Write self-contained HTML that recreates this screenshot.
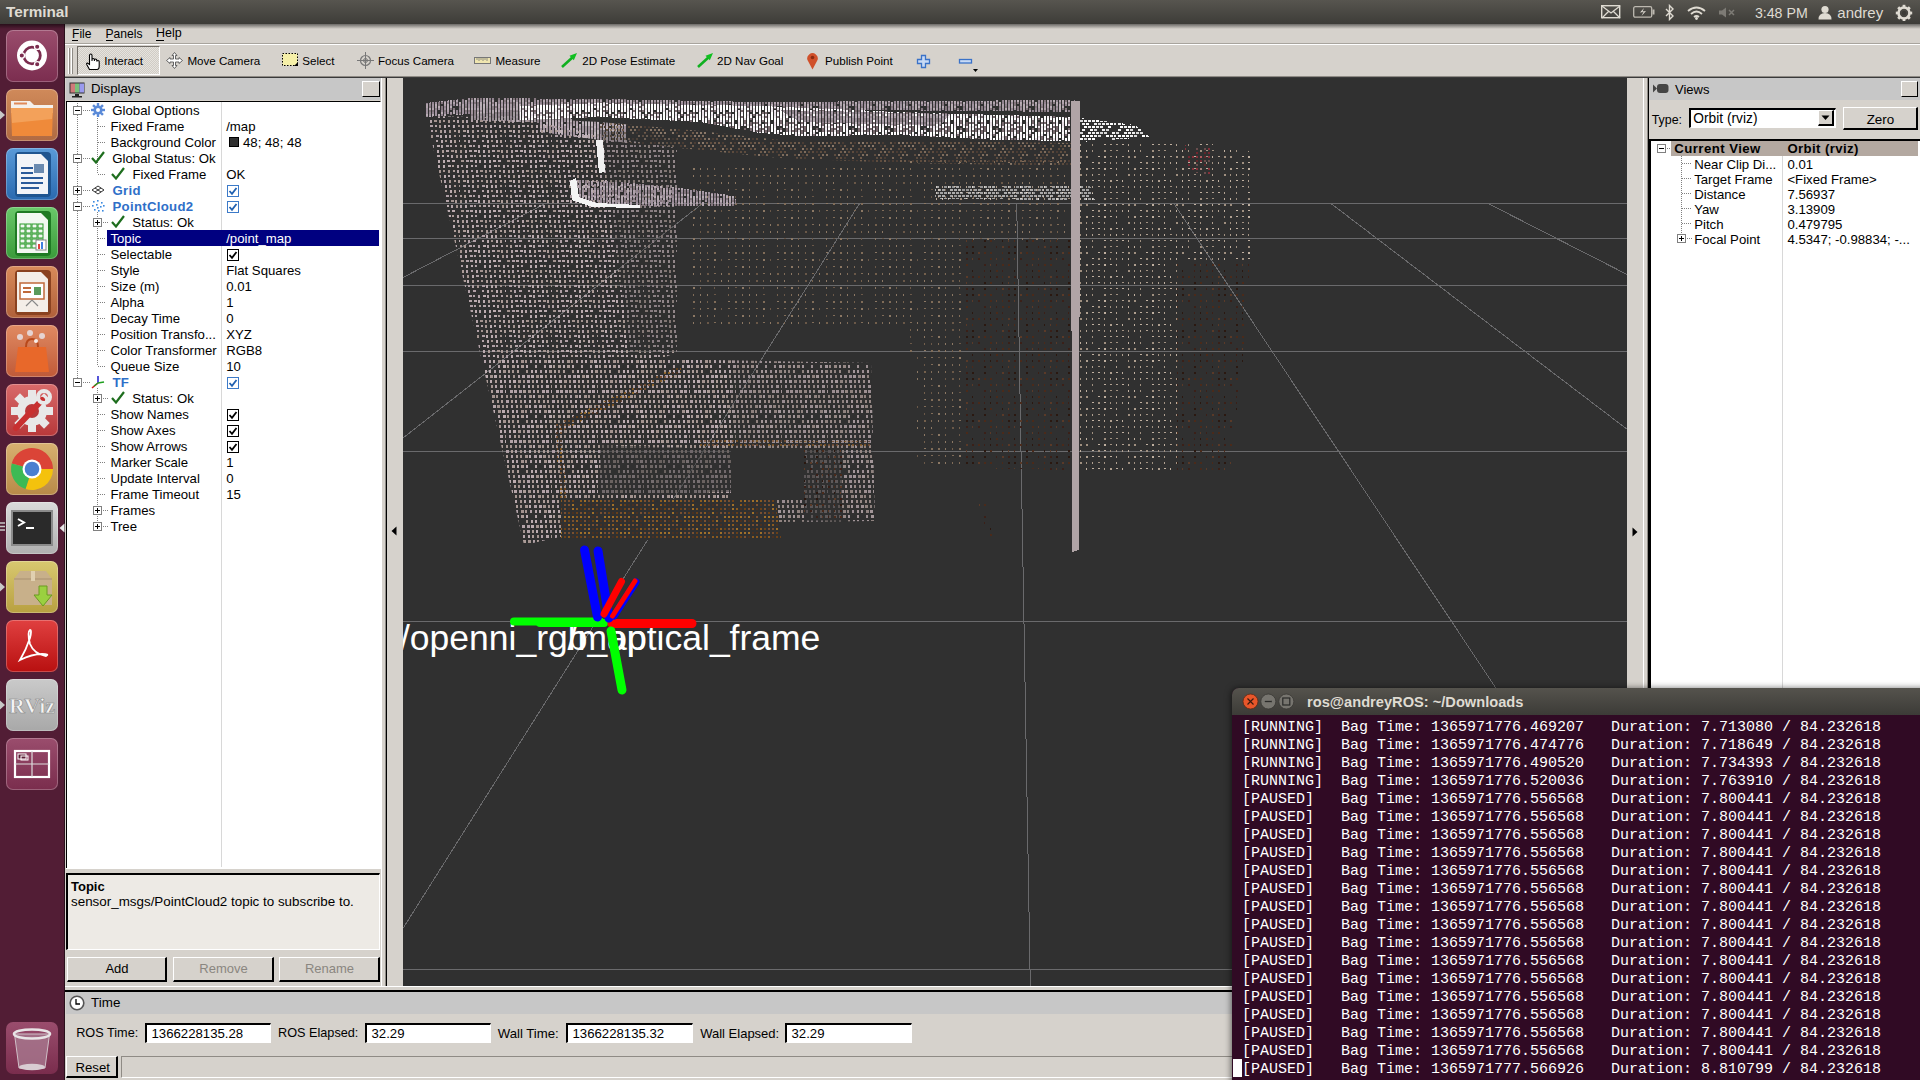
<!DOCTYPE html><html><head><meta charset="utf-8"><style>html,body{margin:0;padding:0;}body{width:1920px;height:1080px;overflow:hidden;position:relative;background:#d6d2cb;font-family:"Liberation Sans",sans-serif;}div{box-sizing:border-box;}</style></head><body>
<div style="position:absolute;left:65px;top:24px;width:1855px;height:1056px;background:#d6d2cc"></div>
<div style="position:absolute;left:72px;top:26.85px;font-family:'Liberation Sans', sans-serif;font-size:12.1px;line-height:14.52px;color:#000;font-weight:normal;white-space:pre;">File</div>
<div style="position:absolute;left:105.5px;top:26.85px;font-family:'Liberation Sans', sans-serif;font-size:12.1px;line-height:14.52px;color:#000;font-weight:normal;white-space:pre;">Panels</div>
<div style="position:absolute;left:156px;top:26.47px;font-family:'Liberation Sans', sans-serif;font-size:12.5px;line-height:15.00px;color:#000;font-weight:normal;white-space:pre;">Help</div>
<div style="position:absolute;left:72px;top:40px;width:6px;height:1px;background:#000"></div>
<div style="position:absolute;left:106px;top:40px;width:7px;height:1px;background:#000"></div>
<div style="position:absolute;left:156px;top:40px;width:8px;height:1px;background:#000"></div>
<div style="position:absolute;left:65px;top:43px;width:1855px;height:1px;background:#a8a49d"></div>
<div style="position:absolute;left:65px;top:44px;width:1855px;height:1px;background:#fff"></div>
<div style="position:absolute;left:65px;top:76px;width:1855px;height:1px;background:#8f8b85"></div>
<div style="position:absolute;left:65px;top:77px;width:1855px;height:1px;background:#3a3a3a"></div>
<div style="position:absolute;left:68px;top:48px;width:2px;height:26px;border-left:1px solid #fff;border-right:1px solid #8f8b85"></div>
<div style="position:absolute;left:71px;top:48px;width:2px;height:26px;border-left:1px solid #fff;border-right:1px solid #8f8b85"></div>
<div style="position:absolute;left:77px;top:46px;width:83px;height:29px;border-left:1px solid #6f6b65;border-top:1px solid #6f6b65;border-right:1px solid #fff;border-bottom:1px solid #fff;background:repeating-conic-gradient(#e6e3de 0 25%,#d0ccc5 0 50%) 0 0/2px 2px"></div>
<svg style="position:absolute;left:84px;top:53px" width="18" height="18"><path d="M5.5 16.5 L3 12 Q2 10 3.5 10 L5.5 11.5 L5.5 2.5 Q5.5 1 6.8 1 Q8 1 8 2.5 L8 8 L8 6.5 Q8 5.5 9.2 5.5 Q10.4 5.5 10.4 6.5 L10.4 8 L10.4 7 Q10.4 6 11.6 6 Q12.8 6 12.8 7 L12.8 8.5 Q12.8 7.5 14 7.5 Q15.2 7.5 15.2 8.5 L15.2 13 Q15.2 16.5 13 16.5 Z" fill="#fff" stroke="#000" stroke-width="1.1"/></svg>
<div style="position:absolute;left:104.3px;top:53.62px;font-family:'Liberation Sans', sans-serif;font-size:11.6px;line-height:13.92px;color:#000;font-weight:normal;white-space:pre;">Interact</div>
<svg style="position:absolute;left:166px;top:52px" width="17" height="17"><g fill="#fff" stroke="#555" stroke-width="0.9"><path d="M8.5 0.5 L11 3.5 L9.5 3.5 L9.5 7 L13 7 L13 5.5 L16.5 8.5 L13 11.5 L13 10 L9.5 10 L9.5 13.5 L11 13.5 L8.5 16.5 L6 13.5 L7.5 13.5 L7.5 10 L4 10 L4 11.5 L0.5 8.5 L4 5.5 L4 7 L7.5 7 L7.5 3.5 L6 3.5 Z"/></g></svg>
<div style="position:absolute;left:187.4px;top:53.62px;font-family:'Liberation Sans', sans-serif;font-size:11.6px;line-height:13.92px;color:#000;font-weight:normal;white-space:pre;">Move Camera</div>
<svg style="position:absolute;left:282px;top:53px" width="17" height="14"><rect x="0.5" y="0.5" width="15" height="12" fill="#f6f0a8" stroke="#000" stroke-dasharray="1.5 1.5"/><path d="M12 13 L16 9 L16 13 Z" fill="#000"/></svg>
<div style="position:absolute;left:302.3px;top:53.62px;font-family:'Liberation Sans', sans-serif;font-size:11.6px;line-height:13.92px;color:#000;font-weight:normal;white-space:pre;">Select</div>
<svg style="position:absolute;left:357px;top:52px" width="17" height="17"><circle cx="8.5" cy="8.5" r="5" fill="none" stroke="#777" stroke-width="1.2"/><circle cx="8.5" cy="8.5" r="2" fill="none" stroke="#777"/><path d="M8.5 0 V17 M0 8.5 H17" stroke="#777" stroke-width="1"/></svg>
<div style="position:absolute;left:378px;top:53.62px;font-family:'Liberation Sans', sans-serif;font-size:11.6px;line-height:13.92px;color:#000;font-weight:normal;white-space:pre;">Focus Camera</div>
<svg style="position:absolute;left:474px;top:57px" width="17" height="7"><rect x="0.5" y="0.5" width="16" height="6" fill="#f0e6b0" stroke="#777"/><path d="M3 1v2M5 1v3M7 1v2M9 1v3M11 1v2M13 1v3" stroke="#777" stroke-width="0.8"/></svg>
<div style="position:absolute;left:495.4px;top:53.62px;font-family:'Liberation Sans', sans-serif;font-size:11.6px;line-height:13.92px;color:#000;font-weight:normal;white-space:pre;">Measure</div>
<svg style="position:absolute;left:561px;top:52px" width="17" height="16"><path d="M1 15 L13 4" stroke="#10b020" stroke-width="2.6"/><path d="M16 1 L8.5 3.8 L12.8 8.2 Z" fill="#10c020"/></svg>
<div style="position:absolute;left:582.3px;top:53.62px;font-family:'Liberation Sans', sans-serif;font-size:11.6px;line-height:13.92px;color:#000;font-weight:normal;white-space:pre;">2D Pose Estimate</div>
<svg style="position:absolute;left:697px;top:52px" width="17" height="16"><path d="M1 15 L13 4" stroke="#10b020" stroke-width="2.6"/><path d="M16 1 L8.5 3.8 L12.8 8.2 Z" fill="#10c020"/></svg>
<div style="position:absolute;left:717px;top:53.62px;font-family:'Liberation Sans', sans-serif;font-size:11.6px;line-height:13.92px;color:#000;font-weight:normal;white-space:pre;">2D Nav Goal</div>
<svg style="position:absolute;left:806px;top:52px" width="13" height="18"><path d="M6.5 17.5 L2 9 A5.2 5.2 0 1 1 11 9 Z" fill="#d0502a"/><circle cx="6.5" cy="5.5" r="1.8" fill="#8a2a10"/></svg>
<div style="position:absolute;left:825px;top:53.62px;font-family:'Liberation Sans', sans-serif;font-size:11.6px;line-height:13.92px;color:#000;font-weight:normal;white-space:pre;">Publish Point</div>
<svg style="position:absolute;left:916px;top:54px" width="15" height="15"><path d="M5.5 1.5 H9.5 V5.5 H13.5 V9.5 H9.5 V13.5 H5.5 V9.5 H1.5 V5.5 H5.5 Z" fill="#c8daf5" stroke="#3a72c8" stroke-width="1.3"/></svg>
<svg style="position:absolute;left:958px;top:57px" width="22" height="16"><rect x="1.5" y="2.5" width="12" height="3.5" fill="#c8daf5" stroke="#3a72c8" stroke-width="1.3"/><path d="M15 12 L20 12 L17.5 15 Z" fill="#000"/></svg>
<div style="position:absolute;left:66px;top:78px;width:315px;height:22px;background:#c7c7c7"></div>
<svg style="position:absolute;left:69px;top:82px" width="17" height="16"><rect x="0.5" y="0.5" width="15" height="11" fill="#333"/><rect x="1.5" y="1.5" width="4.5" height="9" fill="#d07a7a"/><rect x="6" y="1.5" width="4.5" height="9" fill="#7ac07a"/><rect x="10.5" y="1.5" width="4.5" height="9" fill="#9a9aee"/><rect x="6" y="12" width="4" height="2" fill="#222"/><rect x="3" y="14" width="10" height="1.5" fill="#222"/></svg>
<div style="position:absolute;left:91.1px;top:81.31px;font-family:'Liberation Sans', sans-serif;font-size:13.2px;line-height:15.84px;color:#000;font-weight:normal;white-space:pre;">Displays</div>
<div style="position:absolute;left:362px;top:81px;width:18px;height:16px;background:#d6d2cc;border-top:1px solid #fff;border-left:1px solid #fff;border-right:1px solid #000;border-bottom:1px solid #000"></div>
<div style="position:absolute;left:66px;top:101px;width:315px;height:767px;background:#fff;border-top:1px solid #000;border-left:1px solid #000;border-right:1px solid #fff"></div>
<div style="position:absolute;left:221px;top:102px;width:1px;height:765px;background:#d8d8d8"></div>
<div style="position:absolute;left:77px;top:103px;width:1px;height:279px;background:repeating-linear-gradient(180deg,#808080 0 1px,transparent 1px 2px)"></div>
<div style="position:absolute;left:97px;top:116px;width:1px;height:58px;background:repeating-linear-gradient(180deg,#808080 0 1px,transparent 1px 2px)"></div>
<div style="position:absolute;left:97px;top:164px;width:1px;height:10px;background:repeating-linear-gradient(180deg,#808080 0 1px,transparent 1px 2px)"></div>
<div style="position:absolute;left:97px;top:212px;width:1px;height:154px;background:repeating-linear-gradient(180deg,#808080 0 1px,transparent 1px 2px)"></div>
<div style="position:absolute;left:97px;top:388px;width:1px;height:138px;background:repeating-linear-gradient(180deg,#808080 0 1px,transparent 1px 2px)"></div>
<svg style="position:absolute;left:73px;top:106px" width="9" height="9"><rect x="0.5" y="0.5" width="8" height="8" fill="#fff" stroke="#808080"/><line x1="2" y1="4.5" x2="7" y2="4.5" stroke="#000"/></svg>
<div style="position:absolute;left:83px;top:110px;width:7px;height:1px;background:repeating-linear-gradient(90deg,#808080 0 1px,transparent 1px 2px)"></div>
<svg style="position:absolute;left:91px;top:103px" width="14" height="14"><g fill="#5a8ad8"><circle cx="7" cy="7" r="4.6"/><rect x="5.8" y="0" width="2.4" height="3" transform="rotate(0 7 7)"/><rect x="5.8" y="0" width="2.4" height="3" transform="rotate(45 7 7)"/><rect x="5.8" y="0" width="2.4" height="3" transform="rotate(90 7 7)"/><rect x="5.8" y="0" width="2.4" height="3" transform="rotate(135 7 7)"/><rect x="5.8" y="0" width="2.4" height="3" transform="rotate(180 7 7)"/><rect x="5.8" y="0" width="2.4" height="3" transform="rotate(225 7 7)"/><rect x="5.8" y="0" width="2.4" height="3" transform="rotate(270 7 7)"/><rect x="5.8" y="0" width="2.4" height="3" transform="rotate(315 7 7)"/></g><circle cx="7" cy="7" r="2" fill="#fff"/></svg>
<div style="position:absolute;left:112.3px;top:103.01px;font-family:'Liberation Sans', sans-serif;font-size:13.2px;line-height:15.84px;color:#000;font-weight:normal;white-space:pre;">Global Options</div>
<div style="position:absolute;left:98px;top:126px;width:8px;height:1px;background:repeating-linear-gradient(90deg,#808080 0 1px,transparent 1px 2px)"></div>
<div style="position:absolute;left:110.4px;top:119.01px;font-family:'Liberation Sans', sans-serif;font-size:13.2px;line-height:15.84px;color:#000;font-weight:normal;white-space:pre;">Fixed Frame</div>
<div style="position:absolute;left:226.2px;top:119.01px;font-family:'Liberation Sans', sans-serif;font-size:13.2px;line-height:15.84px;color:#000;font-weight:normal;white-space:pre;">/map</div>
<div style="position:absolute;left:98px;top:142px;width:8px;height:1px;background:repeating-linear-gradient(90deg,#808080 0 1px,transparent 1px 2px)"></div>
<div style="position:absolute;left:110.4px;top:135.01px;font-family:'Liberation Sans', sans-serif;font-size:13.2px;line-height:15.84px;color:#000;font-weight:normal;white-space:pre;">Background Color</div>
<div style="position:absolute;left:229px;top:137px;width:10px;height:10px;background:#303030;border:1px solid #000"></div>
<div style="position:absolute;left:243px;top:135.01px;font-family:'Liberation Sans', sans-serif;font-size:13.2px;line-height:15.84px;color:#000;font-weight:normal;white-space:pre;">48; 48; 48</div>
<svg style="position:absolute;left:73px;top:154px" width="9" height="9"><rect x="0.5" y="0.5" width="8" height="8" fill="#fff" stroke="#808080"/><line x1="2" y1="4.5" x2="7" y2="4.5" stroke="#000"/></svg>
<div style="position:absolute;left:83px;top:158px;width:7px;height:1px;background:repeating-linear-gradient(90deg,#808080 0 1px,transparent 1px 2px)"></div>
<svg style="position:absolute;left:91px;top:151px" width="14" height="13"><path d="M1 7 L5 11.5 L13 1" fill="none" stroke="#1e6e1e" stroke-width="2.2"/></svg>
<div style="position:absolute;left:112.3px;top:151.01px;font-family:'Liberation Sans', sans-serif;font-size:13.2px;line-height:15.84px;color:#000;font-weight:normal;white-space:pre;">Global Status: Ok</div>
<div style="position:absolute;left:98px;top:174px;width:8px;height:1px;background:repeating-linear-gradient(90deg,#808080 0 1px,transparent 1px 2px)"></div>
<svg style="position:absolute;left:111px;top:167px" width="14" height="13"><path d="M1 7 L5 11.5 L13 1" fill="none" stroke="#1e6e1e" stroke-width="2.2"/></svg>
<div style="position:absolute;left:132.4px;top:167.01px;font-family:'Liberation Sans', sans-serif;font-size:13.2px;line-height:15.84px;color:#000;font-weight:normal;white-space:pre;">Fixed Frame</div>
<div style="position:absolute;left:226.2px;top:167.01px;font-family:'Liberation Sans', sans-serif;font-size:13.2px;line-height:15.84px;color:#000;font-weight:normal;white-space:pre;">OK</div>
<svg style="position:absolute;left:73px;top:186px" width="9" height="9"><rect x="0.5" y="0.5" width="8" height="8" fill="#fff" stroke="#808080"/><line x1="2" y1="4.5" x2="7" y2="4.5" stroke="#000"/><line x1="4.5" y1="2" x2="4.5" y2="7" stroke="#000"/></svg>
<div style="position:absolute;left:83px;top:190px;width:7px;height:1px;background:repeating-linear-gradient(90deg,#808080 0 1px,transparent 1px 2px)"></div>
<svg style="position:absolute;left:91px;top:185px" width="14" height="10"><path d="M7 1 L13 5 L7 9 L1 5 Z M4 3 L10 7 M10 3 L4 7" fill="none" stroke="#333" stroke-width="1"/></svg>
<div style="position:absolute;left:112.5px;top:183.01px;font-family:'Liberation Sans', sans-serif;font-size:13.2px;line-height:15.84px;color:#2f6fc8;font-weight:bold;white-space:pre;letter-spacing:0.3px">Grid</div>
<svg style="position:absolute;left:227px;top:185px" width="12" height="12"><rect x="0.5" y="0.5" width="11" height="11" fill="#fff" stroke="#3c7ac8"/><path d="M2.5 6 L5 8.8 L9.5 3" fill="none" stroke="#2060b0" stroke-width="1.8"/></svg>
<svg style="position:absolute;left:73px;top:202px" width="9" height="9"><rect x="0.5" y="0.5" width="8" height="8" fill="#fff" stroke="#808080"/><line x1="2" y1="4.5" x2="7" y2="4.5" stroke="#000"/></svg>
<div style="position:absolute;left:83px;top:206px;width:7px;height:1px;background:repeating-linear-gradient(90deg,#808080 0 1px,transparent 1px 2px)"></div>
<svg style="position:absolute;left:91px;top:199px" width="14" height="14"><g fill="#3a8ae0"><rect x="2" y="2" width="1.6" height="1.6"/><rect x="6" y="1" width="1.6" height="1.6"/><rect x="10" y="3" width="1.6" height="1.6"/><rect x="1" y="6" width="1.6" height="1.6"/><rect x="5" y="5" width="1.6" height="1.6"/><rect x="9" y="7" width="1.6" height="1.6"/><rect x="12" y="6" width="1.6" height="1.6"/><rect x="3" y="10" width="1.6" height="1.6"/><rect x="7" y="11" width="1.6" height="1.6"/><rect x="11" y="11" width="1.6" height="1.6"/><rect x="6" y="8" width="1.6" height="1.6"/></g></svg>
<div style="position:absolute;left:112.5px;top:199.01px;font-family:'Liberation Sans', sans-serif;font-size:13.2px;line-height:15.84px;color:#2f6fc8;font-weight:bold;white-space:pre;letter-spacing:0.3px">PointCloud2</div>
<svg style="position:absolute;left:227px;top:201px" width="12" height="12"><rect x="0.5" y="0.5" width="11" height="11" fill="#fff" stroke="#3c7ac8"/><path d="M2.5 6 L5 8.8 L9.5 3" fill="none" stroke="#2060b0" stroke-width="1.8"/></svg>
<svg style="position:absolute;left:93px;top:218px" width="9" height="9"><rect x="0.5" y="0.5" width="8" height="8" fill="#fff" stroke="#808080"/><line x1="2" y1="4.5" x2="7" y2="4.5" stroke="#000"/><line x1="4.5" y1="2" x2="4.5" y2="7" stroke="#000"/></svg>
<div style="position:absolute;left:103px;top:222px;width:5px;height:1px;background:repeating-linear-gradient(90deg,#808080 0 1px,transparent 1px 2px)"></div>
<svg style="position:absolute;left:111px;top:215px" width="14" height="13"><path d="M1 7 L5 11.5 L13 1" fill="none" stroke="#1e6e1e" stroke-width="2.2"/></svg>
<div style="position:absolute;left:132.2px;top:215.01px;font-family:'Liberation Sans', sans-serif;font-size:13.2px;line-height:15.84px;color:#000;font-weight:normal;white-space:pre;">Status: Ok</div>
<div style="position:absolute;left:98px;top:238px;width:8px;height:1px;background:repeating-linear-gradient(90deg,#808080 0 1px,transparent 1px 2px)"></div>
<div style="position:absolute;left:107px;top:230px;width:272px;height:16px;background:#000080"></div>
<div style="position:absolute;left:110.4px;top:231.01px;font-family:'Liberation Sans', sans-serif;font-size:13.2px;line-height:15.84px;color:#fff;font-weight:normal;white-space:pre;">Topic</div>
<div style="position:absolute;left:226.2px;top:231.01px;font-family:'Liberation Sans', sans-serif;font-size:13.2px;line-height:15.84px;color:#fff;font-weight:normal;white-space:pre;">/point_map</div>
<div style="position:absolute;left:98px;top:254px;width:8px;height:1px;background:repeating-linear-gradient(90deg,#808080 0 1px,transparent 1px 2px)"></div>
<div style="position:absolute;left:110.4px;top:247.01px;font-family:'Liberation Sans', sans-serif;font-size:13.2px;line-height:15.84px;color:#000;font-weight:normal;white-space:pre;">Selectable</div>
<svg style="position:absolute;left:227px;top:249px" width="12" height="12"><rect x="0.5" y="0.5" width="11" height="11" fill="#fff" stroke="#000"/><path d="M2.5 6 L5 8.8 L9.5 3" fill="none" stroke="#000" stroke-width="1.8"/></svg>
<div style="position:absolute;left:98px;top:270px;width:8px;height:1px;background:repeating-linear-gradient(90deg,#808080 0 1px,transparent 1px 2px)"></div>
<div style="position:absolute;left:110.4px;top:263.01px;font-family:'Liberation Sans', sans-serif;font-size:13.2px;line-height:15.84px;color:#000;font-weight:normal;white-space:pre;">Style</div>
<div style="position:absolute;left:226.2px;top:263.01px;font-family:'Liberation Sans', sans-serif;font-size:13.2px;line-height:15.84px;color:#000;font-weight:normal;white-space:pre;">Flat Squares</div>
<div style="position:absolute;left:98px;top:286px;width:8px;height:1px;background:repeating-linear-gradient(90deg,#808080 0 1px,transparent 1px 2px)"></div>
<div style="position:absolute;left:110.4px;top:279.01px;font-family:'Liberation Sans', sans-serif;font-size:13.2px;line-height:15.84px;color:#000;font-weight:normal;white-space:pre;">Size (m)</div>
<div style="position:absolute;left:226.2px;top:279.01px;font-family:'Liberation Sans', sans-serif;font-size:13.2px;line-height:15.84px;color:#000;font-weight:normal;white-space:pre;">0.01</div>
<div style="position:absolute;left:98px;top:302px;width:8px;height:1px;background:repeating-linear-gradient(90deg,#808080 0 1px,transparent 1px 2px)"></div>
<div style="position:absolute;left:110.4px;top:295.01px;font-family:'Liberation Sans', sans-serif;font-size:13.2px;line-height:15.84px;color:#000;font-weight:normal;white-space:pre;">Alpha</div>
<div style="position:absolute;left:226.2px;top:295.01px;font-family:'Liberation Sans', sans-serif;font-size:13.2px;line-height:15.84px;color:#000;font-weight:normal;white-space:pre;">1</div>
<div style="position:absolute;left:98px;top:318px;width:8px;height:1px;background:repeating-linear-gradient(90deg,#808080 0 1px,transparent 1px 2px)"></div>
<div style="position:absolute;left:110.4px;top:311.01px;font-family:'Liberation Sans', sans-serif;font-size:13.2px;line-height:15.84px;color:#000;font-weight:normal;white-space:pre;">Decay Time</div>
<div style="position:absolute;left:226.2px;top:311.01px;font-family:'Liberation Sans', sans-serif;font-size:13.2px;line-height:15.84px;color:#000;font-weight:normal;white-space:pre;">0</div>
<div style="position:absolute;left:98px;top:334px;width:8px;height:1px;background:repeating-linear-gradient(90deg,#808080 0 1px,transparent 1px 2px)"></div>
<div style="position:absolute;left:110.4px;top:327.01px;font-family:'Liberation Sans', sans-serif;font-size:13.2px;line-height:15.84px;color:#000;font-weight:normal;white-space:pre;">Position Transfo...</div>
<div style="position:absolute;left:226.2px;top:327.01px;font-family:'Liberation Sans', sans-serif;font-size:13.2px;line-height:15.84px;color:#000;font-weight:normal;white-space:pre;">XYZ</div>
<div style="position:absolute;left:98px;top:350px;width:8px;height:1px;background:repeating-linear-gradient(90deg,#808080 0 1px,transparent 1px 2px)"></div>
<div style="position:absolute;left:110.4px;top:343.01px;font-family:'Liberation Sans', sans-serif;font-size:13.2px;line-height:15.84px;color:#000;font-weight:normal;white-space:pre;">Color Transformer</div>
<div style="position:absolute;left:226.2px;top:343.01px;font-family:'Liberation Sans', sans-serif;font-size:13.2px;line-height:15.84px;color:#000;font-weight:normal;white-space:pre;">RGB8</div>
<div style="position:absolute;left:98px;top:366px;width:8px;height:1px;background:repeating-linear-gradient(90deg,#808080 0 1px,transparent 1px 2px)"></div>
<div style="position:absolute;left:110.4px;top:359.01px;font-family:'Liberation Sans', sans-serif;font-size:13.2px;line-height:15.84px;color:#000;font-weight:normal;white-space:pre;">Queue Size</div>
<div style="position:absolute;left:226.2px;top:359.01px;font-family:'Liberation Sans', sans-serif;font-size:13.2px;line-height:15.84px;color:#000;font-weight:normal;white-space:pre;">10</div>
<svg style="position:absolute;left:73px;top:378px" width="9" height="9"><rect x="0.5" y="0.5" width="8" height="8" fill="#fff" stroke="#808080"/><line x1="2" y1="4.5" x2="7" y2="4.5" stroke="#000"/></svg>
<div style="position:absolute;left:83px;top:382px;width:7px;height:1px;background:repeating-linear-gradient(90deg,#808080 0 1px,transparent 1px 2px)"></div>
<svg style="position:absolute;left:90px;top:374px" width="16" height="16"><path d="M8 9 L8 2" stroke="#2a2ad0" stroke-width="1.6"/><path d="M8 9 L14 8" stroke="#20a020" stroke-width="1.6"/><path d="M8 9 L2 14" stroke="#d02020" stroke-width="1.6"/><path d="M8 9 L4 12" stroke="#20a020" stroke-width="1.2"/></svg>
<div style="position:absolute;left:112.5px;top:375.01px;font-family:'Liberation Sans', sans-serif;font-size:13.2px;line-height:15.84px;color:#2f6fc8;font-weight:bold;white-space:pre;letter-spacing:0.3px">TF</div>
<svg style="position:absolute;left:227px;top:377px" width="12" height="12"><rect x="0.5" y="0.5" width="11" height="11" fill="#fff" stroke="#3c7ac8"/><path d="M2.5 6 L5 8.8 L9.5 3" fill="none" stroke="#2060b0" stroke-width="1.8"/></svg>
<svg style="position:absolute;left:93px;top:394px" width="9" height="9"><rect x="0.5" y="0.5" width="8" height="8" fill="#fff" stroke="#808080"/><line x1="2" y1="4.5" x2="7" y2="4.5" stroke="#000"/><line x1="4.5" y1="2" x2="4.5" y2="7" stroke="#000"/></svg>
<div style="position:absolute;left:103px;top:398px;width:5px;height:1px;background:repeating-linear-gradient(90deg,#808080 0 1px,transparent 1px 2px)"></div>
<svg style="position:absolute;left:111px;top:391px" width="14" height="13"><path d="M1 7 L5 11.5 L13 1" fill="none" stroke="#1e6e1e" stroke-width="2.2"/></svg>
<div style="position:absolute;left:132.2px;top:391.01px;font-family:'Liberation Sans', sans-serif;font-size:13.2px;line-height:15.84px;color:#000;font-weight:normal;white-space:pre;">Status: Ok</div>
<div style="position:absolute;left:98px;top:414px;width:8px;height:1px;background:repeating-linear-gradient(90deg,#808080 0 1px,transparent 1px 2px)"></div>
<div style="position:absolute;left:110.4px;top:407.01px;font-family:'Liberation Sans', sans-serif;font-size:13.2px;line-height:15.84px;color:#000;font-weight:normal;white-space:pre;">Show Names</div>
<svg style="position:absolute;left:227px;top:409px" width="12" height="12"><rect x="0.5" y="0.5" width="11" height="11" fill="#fff" stroke="#000"/><path d="M2.5 6 L5 8.8 L9.5 3" fill="none" stroke="#000" stroke-width="1.8"/></svg>
<div style="position:absolute;left:98px;top:430px;width:8px;height:1px;background:repeating-linear-gradient(90deg,#808080 0 1px,transparent 1px 2px)"></div>
<div style="position:absolute;left:110.4px;top:423.01px;font-family:'Liberation Sans', sans-serif;font-size:13.2px;line-height:15.84px;color:#000;font-weight:normal;white-space:pre;">Show Axes</div>
<svg style="position:absolute;left:227px;top:425px" width="12" height="12"><rect x="0.5" y="0.5" width="11" height="11" fill="#fff" stroke="#000"/><path d="M2.5 6 L5 8.8 L9.5 3" fill="none" stroke="#000" stroke-width="1.8"/></svg>
<div style="position:absolute;left:98px;top:446px;width:8px;height:1px;background:repeating-linear-gradient(90deg,#808080 0 1px,transparent 1px 2px)"></div>
<div style="position:absolute;left:110.4px;top:439.01px;font-family:'Liberation Sans', sans-serif;font-size:13.2px;line-height:15.84px;color:#000;font-weight:normal;white-space:pre;">Show Arrows</div>
<svg style="position:absolute;left:227px;top:441px" width="12" height="12"><rect x="0.5" y="0.5" width="11" height="11" fill="#fff" stroke="#000"/><path d="M2.5 6 L5 8.8 L9.5 3" fill="none" stroke="#000" stroke-width="1.8"/></svg>
<div style="position:absolute;left:98px;top:462px;width:8px;height:1px;background:repeating-linear-gradient(90deg,#808080 0 1px,transparent 1px 2px)"></div>
<div style="position:absolute;left:110.4px;top:455.01px;font-family:'Liberation Sans', sans-serif;font-size:13.2px;line-height:15.84px;color:#000;font-weight:normal;white-space:pre;">Marker Scale</div>
<div style="position:absolute;left:226.2px;top:455.01px;font-family:'Liberation Sans', sans-serif;font-size:13.2px;line-height:15.84px;color:#000;font-weight:normal;white-space:pre;">1</div>
<div style="position:absolute;left:98px;top:478px;width:8px;height:1px;background:repeating-linear-gradient(90deg,#808080 0 1px,transparent 1px 2px)"></div>
<div style="position:absolute;left:110.4px;top:471.01px;font-family:'Liberation Sans', sans-serif;font-size:13.2px;line-height:15.84px;color:#000;font-weight:normal;white-space:pre;">Update Interval</div>
<div style="position:absolute;left:226.2px;top:471.01px;font-family:'Liberation Sans', sans-serif;font-size:13.2px;line-height:15.84px;color:#000;font-weight:normal;white-space:pre;">0</div>
<div style="position:absolute;left:98px;top:494px;width:8px;height:1px;background:repeating-linear-gradient(90deg,#808080 0 1px,transparent 1px 2px)"></div>
<div style="position:absolute;left:110.4px;top:487.01px;font-family:'Liberation Sans', sans-serif;font-size:13.2px;line-height:15.84px;color:#000;font-weight:normal;white-space:pre;">Frame Timeout</div>
<div style="position:absolute;left:226.2px;top:487.01px;font-family:'Liberation Sans', sans-serif;font-size:13.2px;line-height:15.84px;color:#000;font-weight:normal;white-space:pre;">15</div>
<svg style="position:absolute;left:93px;top:506px" width="9" height="9"><rect x="0.5" y="0.5" width="8" height="8" fill="#fff" stroke="#808080"/><line x1="2" y1="4.5" x2="7" y2="4.5" stroke="#000"/><line x1="4.5" y1="2" x2="4.5" y2="7" stroke="#000"/></svg>
<div style="position:absolute;left:103px;top:510px;width:5px;height:1px;background:repeating-linear-gradient(90deg,#808080 0 1px,transparent 1px 2px)"></div>
<div style="position:absolute;left:110.4px;top:503.01px;font-family:'Liberation Sans', sans-serif;font-size:13.2px;line-height:15.84px;color:#000;font-weight:normal;white-space:pre;">Frames</div>
<svg style="position:absolute;left:93px;top:522px" width="9" height="9"><rect x="0.5" y="0.5" width="8" height="8" fill="#fff" stroke="#808080"/><line x1="2" y1="4.5" x2="7" y2="4.5" stroke="#000"/><line x1="4.5" y1="2" x2="4.5" y2="7" stroke="#000"/></svg>
<div style="position:absolute;left:103px;top:526px;width:5px;height:1px;background:repeating-linear-gradient(90deg,#808080 0 1px,transparent 1px 2px)"></div>
<div style="position:absolute;left:110.4px;top:519.01px;font-family:'Liberation Sans', sans-serif;font-size:13.2px;line-height:15.84px;color:#000;font-weight:normal;white-space:pre;">Tree</div>
<div style="position:absolute;left:66px;top:868px;width:315px;height:5px;background:#d6d2cc;border-top:1px solid #fff"></div>
<div style="position:absolute;left:66px;top:873px;width:314px;height:77px;background:#edeae5;border-top:2px solid #000;border-left:2px solid #000;border-right:1px solid #fff;border-bottom:1px solid #fff"></div>
<div style="position:absolute;left:71px;top:879.20px;font-family:'Liberation Sans', sans-serif;font-size:13px;line-height:15.60px;color:#000;font-weight:bold;white-space:pre;">Topic</div>
<div style="position:absolute;left:71px;top:893.82px;font-family:'Liberation Sans', sans-serif;font-size:13.4px;line-height:16.08px;color:#000;font-weight:normal;white-space:pre;">sensor_msgs/PointCloud2 topic to subscribe to.</div>
<div style="position:absolute;left:67px;top:957px;width:100px;height:25px;background:#d6d2cc;border-top:1px solid #fff;border-left:1px solid #fff;border-right:2px solid #000;border-bottom:2px solid #000"></div>
<div style="position:absolute;left:67px;top:957px;width:100px;height:25px;line-height:24px;text-align:center;font-size:13px;color:#000;white-space:pre">Add</div>
<div style="position:absolute;left:173px;top:957px;width:101px;height:25px;background:#d6d2cc;border-top:1px solid #fff;border-left:1px solid #fff;border-right:2px solid #000;border-bottom:2px solid #000"></div>
<div style="position:absolute;left:173px;top:957px;width:101px;height:25px;line-height:24px;text-align:center;font-size:13px;color:#8a8680;white-space:pre">Remove</div>
<div style="position:absolute;left:279px;top:957px;width:101px;height:25px;background:#d6d2cc;border-top:1px solid #fff;border-left:1px solid #fff;border-right:2px solid #000;border-bottom:2px solid #000"></div>
<div style="position:absolute;left:279px;top:957px;width:101px;height:25px;line-height:24px;text-align:center;font-size:13px;color:#8a8680;white-space:pre">Rename</div>
<div style="position:absolute;left:381px;top:78px;width:1px;height:909px;background:#fff"></div>
<div style="position:absolute;left:385px;top:78px;width:1px;height:909px;background:#8f8b85"></div>
<div style="position:absolute;left:386px;top:78px;width:1px;height:909px;background:#000"></div>
<svg style="position:absolute;left:391px;top:526px" width="6" height="10"><path d="M5.5 0.5 L0.5 5 L5.5 9.5 Z" fill="#000"/></svg>
<div style="position:absolute;left:1643px;top:78px;width:1px;height:909px;background:#fff"></div>
<div style="position:absolute;left:1647px;top:78px;width:1px;height:909px;background:#8f8b85"></div>
<div style="position:absolute;left:1648px;top:78px;width:1px;height:909px;background:#000"></div>
<svg style="position:absolute;left:1632px;top:527px" width="6" height="10"><path d="M0.5 0.5 L5.5 5 L0.5 9.5 Z" fill="#000"/></svg>
<div style="position:absolute;left:1649px;top:78px;width:271px;height:22px;background:#c7c7c7"></div>
<svg style="position:absolute;left:1652px;top:83px" width="18" height="12"><path d="M1 1.5 L5 5.5 L1 9.5 Z" fill="#444"/><rect x="5" y="1" width="11.5" height="9" rx="3" fill="#444"/></svg>
<div style="position:absolute;left:1675px;top:81.50px;font-family:'Liberation Sans', sans-serif;font-size:13px;line-height:15.60px;color:#000;font-weight:normal;white-space:pre;">Views</div>
<div style="position:absolute;left:1901px;top:81px;width:17px;height:16px;background:#d6d2cc;border-top:1px solid #fff;border-left:1px solid #fff;border-right:1px solid #000;border-bottom:1px solid #000"></div>
<div style="position:absolute;left:1651.7px;top:112.76px;font-family:'Liberation Sans', sans-serif;font-size:12.4px;line-height:14.88px;color:#000;font-weight:normal;white-space:pre;">Type:</div>
<div style="position:absolute;left:1689px;top:108px;width:147px;height:20px;background:#fff;border-top:2px solid #000;border-left:2px solid #000;border-right:1px solid #fff;border-bottom:1px solid #fff"></div>
<div style="position:absolute;left:1693.3px;top:111.49px;font-family:'Liberation Sans', sans-serif;font-size:13.75px;line-height:16.50px;color:#000;font-weight:normal;white-space:pre;">Orbit (rviz)</div>
<div style="position:absolute;left:1818px;top:110px;width:16px;height:16px;background:#d6d2cc;border-top:1px solid #fff;border-left:1px solid #fff;border-right:2px solid #000;border-bottom:2px solid #000"></div>
<svg style="position:absolute;left:1821px;top:115px" width="9" height="6"><path d="M0.5 0.5 L8.5 0.5 L4.5 5 Z" fill="#000"/></svg>
<div style="position:absolute;left:1843px;top:107px;width:75px;height:23px;background:#d6d2cc;border-top:1px solid #fff;border-left:1px solid #fff;border-right:2px solid #000;border-bottom:2px solid #000"></div>
<div style="position:absolute;left:1866.7px;top:111.82px;font-family:'Liberation Sans', sans-serif;font-size:13.4px;line-height:16.08px;color:#000;font-weight:normal;white-space:pre;">Zero</div>
<div style="position:absolute;left:1649px;top:139px;width:271px;height:549px;background:#fff;border-top:2px solid #000;border-left:2px solid #000"></div>
<div style="position:absolute;left:1782px;top:141px;width:1px;height:547px;background:#d8d8d8"></div>
<div style="position:absolute;left:1671px;top:141px;width:247px;height:15px;background:#b3a8a0"></div>
<svg style="position:absolute;left:1657px;top:144px" width="9" height="9"><rect x="0.5" y="0.5" width="8" height="8" fill="#fff" stroke="#808080"/><line x1="2" y1="4.5" x2="7" y2="4.5" stroke="#000"/></svg>
<div style="position:absolute;left:1667px;top:148px;width:4px;height:1px;background:repeating-linear-gradient(90deg,#808080 0 1px,transparent 1px 2px)"></div>
<div style="position:absolute;left:1674.3px;top:141.31px;font-family:'Liberation Sans', sans-serif;font-size:13.2px;line-height:15.84px;color:#000;font-weight:bold;white-space:pre;letter-spacing:0.45px">Current View</div>
<div style="position:absolute;left:1787.4px;top:141.31px;font-family:'Liberation Sans', sans-serif;font-size:13.2px;line-height:15.84px;color:#000;font-weight:bold;white-space:pre;letter-spacing:0.4px">Orbit (rviz)</div>
<div style="position:absolute;left:1681px;top:156px;width:1px;height:77px;background:repeating-linear-gradient(180deg,#808080 0 1px,transparent 1px 2px)"></div>
<div style="position:absolute;left:1682px;top:163px;width:9px;height:1px;background:repeating-linear-gradient(90deg,#808080 0 1px,transparent 1px 2px)"></div>
<div style="position:absolute;left:1694.2px;top:156.51px;font-family:'Liberation Sans', sans-serif;font-size:13.2px;line-height:15.84px;color:#000;font-weight:normal;white-space:pre;">Near Clip Di...</div>
<div style="position:absolute;left:1787.4px;top:156.51px;font-family:'Liberation Sans', sans-serif;font-size:13.2px;line-height:15.84px;color:#000;font-weight:normal;white-space:pre;">0.01</div>
<div style="position:absolute;left:1682px;top:178px;width:9px;height:1px;background:repeating-linear-gradient(90deg,#808080 0 1px,transparent 1px 2px)"></div>
<div style="position:absolute;left:1694.2px;top:171.51px;font-family:'Liberation Sans', sans-serif;font-size:13.2px;line-height:15.84px;color:#000;font-weight:normal;white-space:pre;">Target Frame</div>
<div style="position:absolute;left:1787.4px;top:171.51px;font-family:'Liberation Sans', sans-serif;font-size:13.2px;line-height:15.84px;color:#000;font-weight:normal;white-space:pre;">&lt;Fixed Frame&gt;</div>
<div style="position:absolute;left:1682px;top:193px;width:9px;height:1px;background:repeating-linear-gradient(90deg,#808080 0 1px,transparent 1px 2px)"></div>
<div style="position:absolute;left:1694.2px;top:186.51px;font-family:'Liberation Sans', sans-serif;font-size:13.2px;line-height:15.84px;color:#000;font-weight:normal;white-space:pre;">Distance</div>
<div style="position:absolute;left:1787.4px;top:186.51px;font-family:'Liberation Sans', sans-serif;font-size:13.2px;line-height:15.84px;color:#000;font-weight:normal;white-space:pre;">7.56937</div>
<div style="position:absolute;left:1682px;top:208px;width:9px;height:1px;background:repeating-linear-gradient(90deg,#808080 0 1px,transparent 1px 2px)"></div>
<div style="position:absolute;left:1694.2px;top:201.51px;font-family:'Liberation Sans', sans-serif;font-size:13.2px;line-height:15.84px;color:#000;font-weight:normal;white-space:pre;">Yaw</div>
<div style="position:absolute;left:1787.4px;top:201.51px;font-family:'Liberation Sans', sans-serif;font-size:13.2px;line-height:15.84px;color:#000;font-weight:normal;white-space:pre;">3.13909</div>
<div style="position:absolute;left:1682px;top:223px;width:9px;height:1px;background:repeating-linear-gradient(90deg,#808080 0 1px,transparent 1px 2px)"></div>
<div style="position:absolute;left:1694.2px;top:216.51px;font-family:'Liberation Sans', sans-serif;font-size:13.2px;line-height:15.84px;color:#000;font-weight:normal;white-space:pre;">Pitch</div>
<div style="position:absolute;left:1787.4px;top:216.51px;font-family:'Liberation Sans', sans-serif;font-size:13.2px;line-height:15.84px;color:#000;font-weight:normal;white-space:pre;">0.479795</div>
<svg style="position:absolute;left:1677px;top:234px" width="9" height="9"><rect x="0.5" y="0.5" width="8" height="8" fill="#fff" stroke="#808080"/><line x1="2" y1="4.5" x2="7" y2="4.5" stroke="#000"/><line x1="4.5" y1="2" x2="4.5" y2="7" stroke="#000"/></svg>
<div style="position:absolute;left:1687px;top:238px;width:5px;height:1px;background:repeating-linear-gradient(90deg,#808080 0 1px,transparent 1px 2px)"></div>
<div style="position:absolute;left:1694.2px;top:231.51px;font-family:'Liberation Sans', sans-serif;font-size:13.2px;line-height:15.84px;color:#000;font-weight:normal;white-space:pre;">Focal Point</div>
<div style="position:absolute;left:1787.4px;top:231.51px;font-family:'Liberation Sans', sans-serif;font-size:13.2px;line-height:15.84px;color:#000;font-weight:normal;white-space:pre;">4.5347; -0.98834; -...</div>
<div style="position:absolute;left:65px;top:986px;width:1855px;height:1px;background:#fff"></div>
<div style="position:absolute;left:65px;top:990px;width:1855px;height:2px;background:#000"></div>
<div style="position:absolute;left:66px;top:992px;width:1854px;height:22px;background:#c7c7c7"></div>
<svg style="position:absolute;left:69px;top:995px" width="16" height="16"><circle cx="8" cy="8" r="6.8" fill="#fff" stroke="#555" stroke-width="1.6"/><path d="M7 4 V9 H11" fill="none" stroke="#000" stroke-width="1.3"/></svg>
<div style="position:absolute;left:91.1px;top:995.32px;font-family:'Liberation Sans', sans-serif;font-size:13.4px;line-height:16.08px;color:#000;font-weight:normal;white-space:pre;">Time</div>
<div style="position:absolute;left:76.2px;top:1026.28px;font-family:'Liberation Sans', sans-serif;font-size:12.7px;line-height:15.24px;color:#000;font-weight:normal;white-space:pre;">ROS Time:</div>
<div style="position:absolute;left:278px;top:1026.28px;font-family:'Liberation Sans', sans-serif;font-size:12.7px;line-height:15.24px;color:#000;font-weight:normal;white-space:pre;">ROS Elapsed:</div>
<div style="position:absolute;left:497.7px;top:1025.81px;font-family:'Liberation Sans', sans-serif;font-size:13.2px;line-height:15.84px;color:#000;font-weight:normal;white-space:pre;">Wall Time:</div>
<div style="position:absolute;left:700.2px;top:1026.00px;font-family:'Liberation Sans', sans-serif;font-size:13px;line-height:15.60px;color:#000;font-weight:normal;white-space:pre;">Wall Elapsed:</div>
<div style="position:absolute;left:145px;top:1023px;width:126px;height:20px;background:#fff;border-top:2px solid #000;border-left:2px solid #000;border-right:1px solid #fff;border-bottom:1px solid #fff"></div>
<div style="position:absolute;left:151.5px;top:1025.81px;font-family:'Liberation Sans', sans-serif;font-size:13.2px;line-height:15.84px;color:#000;font-weight:normal;white-space:pre;">1366228135.28</div>
<div style="position:absolute;left:365px;top:1023px;width:126px;height:20px;background:#fff;border-top:2px solid #000;border-left:2px solid #000;border-right:1px solid #fff;border-bottom:1px solid #fff"></div>
<div style="position:absolute;left:371.5px;top:1025.81px;font-family:'Liberation Sans', sans-serif;font-size:13.2px;line-height:15.84px;color:#000;font-weight:normal;white-space:pre;">32.29</div>
<div style="position:absolute;left:566px;top:1023px;width:127px;height:20px;background:#fff;border-top:2px solid #000;border-left:2px solid #000;border-right:1px solid #fff;border-bottom:1px solid #fff"></div>
<div style="position:absolute;left:572.5px;top:1025.81px;font-family:'Liberation Sans', sans-serif;font-size:13.2px;line-height:15.84px;color:#000;font-weight:normal;white-space:pre;">1366228135.32</div>
<div style="position:absolute;left:785px;top:1023px;width:127px;height:20px;background:#fff;border-top:2px solid #000;border-left:2px solid #000;border-right:1px solid #fff;border-bottom:1px solid #fff"></div>
<div style="position:absolute;left:791.5px;top:1025.81px;font-family:'Liberation Sans', sans-serif;font-size:13.2px;line-height:15.84px;color:#000;font-weight:normal;white-space:pre;">32.29</div>
<div style="position:absolute;left:66px;top:1056px;width:52px;height:22px;background:#d6d2cc;border-top:1px solid #fff;border-left:1px solid #fff;border-right:2px solid #000;border-bottom:2px solid #000"></div>
<div style="position:absolute;left:75.5px;top:1059.51px;font-family:'Liberation Sans', sans-serif;font-size:13.2px;line-height:15.84px;color:#000;font-weight:normal;white-space:pre;">Reset</div>
<div style="position:absolute;left:121px;top:1056px;width:1799px;height:22px;border-top:1px solid #8f8b85;border-left:1px solid #8f8b85;border-bottom:1px solid #fff"></div>
<svg style="position:absolute;left:403px;top:78px" width="1224" height="908" viewBox="403 78 1224 908" shape-rendering="crispEdges"><defs><pattern id="pw1" width="48" height="48" patternUnits="userSpaceOnUse"><path fill="#b0a0a6" d="M0 0h2v2h-2zM4 0h2v2h-2zM8 0h2v2h-2zM28 0h2v2h-2zM40 0h2v2h-2zM6 4h2v2h-2zM26 4h2v2h-2zM4 8h2v2h-2zM8 8h2v2h-2zM20 8h2v2h-2zM36 8h2v2h-2zM44 8h2v2h-2zM26 12h2v2h-2zM0 16h2v2h-2zM36 16h2v2h-2zM40 16h2v2h-2zM2 20h2v2h-2zM18 20h2v2h-2zM16 24h2v2h-2zM46 28h2v2h-2zM24 32h2v2h-2zM36 32h2v2h-2zM6 36h2v2h-2zM18 36h2v2h-2zM30 36h2v2h-2zM8 40h2v2h-2zM16 40h2v2h-2zM44 40h2v2h-2zM10 44h2v2h-2z"/><path fill="#b4a4a8" d="M12 0h2v2h-2zM44 0h2v2h-2zM2 4h2v2h-2zM10 4h2v2h-2zM34 4h2v2h-2zM16 8h2v2h-2zM2 12h2v2h-2zM10 12h2v2h-2zM22 12h2v2h-2zM42 12h2v2h-2zM46 12h2v2h-2zM16 16h2v2h-2zM44 16h2v2h-2zM0 24h2v2h-2zM4 24h2v2h-2zM36 24h2v2h-2zM14 28h2v2h-2zM38 28h2v2h-2zM4 32h2v2h-2zM32 32h2v2h-2zM38 36h2v2h-2zM42 36h2v2h-2zM0 40h2v2h-2zM20 40h2v2h-2zM28 40h2v2h-2zM40 40h2v2h-2zM2 44h2v2h-2zM14 44h2v2h-2zM18 44h2v2h-2zM26 44h2v2h-2zM30 44h2v2h-2zM34 44h2v2h-2z"/><path fill="#a49490" d="M16 0h2v2h-2zM24 0h2v2h-2zM18 4h2v2h-2zM22 4h2v2h-2zM38 4h2v2h-2zM42 4h2v2h-2zM0 8h2v2h-2zM6 12h2v2h-2zM18 12h2v2h-2zM30 12h2v2h-2zM32 16h2v2h-2zM10 20h2v2h-2zM22 20h2v2h-2zM30 20h2v2h-2zM12 24h2v2h-2zM32 24h2v2h-2zM34 28h2v2h-2zM12 32h2v2h-2zM20 32h2v2h-2zM28 32h2v2h-2zM2 36h2v2h-2zM34 36h2v2h-2zM4 40h2v2h-2zM38 44h2v2h-2zM46 44h2v2h-2z"/><path fill="#ac9c98" d="M20 0h2v2h-2zM32 0h2v2h-2zM36 0h2v2h-2zM30 4h2v2h-2zM24 8h2v2h-2zM40 8h2v2h-2zM14 12h2v2h-2zM4 16h2v2h-2zM6 20h2v2h-2zM34 20h2v2h-2zM44 24h2v2h-2zM2 28h2v2h-2zM10 28h2v2h-2zM22 28h2v2h-2zM26 28h2v2h-2zM30 28h2v2h-2zM42 28h2v2h-2zM44 32h2v2h-2zM14 36h2v2h-2zM26 36h2v2h-2zM12 40h2v2h-2zM24 40h2v2h-2zM36 40h2v2h-2zM6 44h2v2h-2zM22 44h2v2h-2z"/><path fill="#bcacb0" d="M14 4h2v2h-2zM46 4h2v2h-2zM12 8h2v2h-2zM28 8h2v2h-2zM34 12h2v2h-2zM38 12h2v2h-2zM12 16h2v2h-2zM24 16h2v2h-2zM38 20h2v2h-2zM42 20h2v2h-2zM46 20h2v2h-2zM20 24h2v2h-2zM24 24h2v2h-2zM28 24h2v2h-2zM6 28h2v2h-2zM18 28h2v2h-2zM0 32h2v2h-2zM8 32h2v2h-2zM16 32h2v2h-2zM46 36h2v2h-2zM32 40h2v2h-2zM42 44h2v2h-2z"/></pattern><pattern id="pw2" width="46" height="50" patternUnits="userSpaceOnUse"><path fill="#a49490" d="M0 0h2v3h-2zM37 0h3v2h-3zM42 5h2v3h-2zM1 10h3v2h-3zM20 20h3v2h-3zM25 20h2v3h-2zM29 20h2v2h-2zM34 20h2v3h-2zM7 25h2v3h-2zM25 25h2v3h-2zM44 25h2v2h-2zM21 30h2v2h-2zM35 30h2v3h-2zM17 35h2v3h-2zM40 35h2v2h-2zM45 35h3v2h-3zM4 40h2v2h-2zM31 40h2v2h-2z"/><path fill="#b4a4a8" d="M5 0h2v3h-2zM9 0h3v2h-3zM32 0h3v2h-3zM23 5h3v2h-3zM37 5h2v3h-2zM10 10h3v2h-3zM19 10h2v3h-2zM43 15h2v3h-2zM16 20h2v3h-2zM43 20h2v3h-2zM21 25h2v2h-2zM12 35h2v3h-2zM35 35h2v3h-2zM22 40h2v2h-2zM9 45h3v2h-3zM27 45h2v3h-2z"/><path fill="#bcacb0" d="M14 0h3v2h-3zM18 0h2v3h-2zM23 0h2v3h-2zM5 5h2v3h-2zM28 5h2v2h-2zM33 5h2v2h-2zM15 10h2v3h-2zM24 10h2v3h-2zM29 10h2v3h-2zM33 10h3v2h-3zM38 10h3v2h-3zM6 15h2v3h-2zM11 15h2v2h-2zM24 15h2v3h-2zM29 15h2v3h-2zM34 15h3v2h-3zM12 25h2v3h-2zM30 25h2v3h-2zM34 25h2v2h-2zM39 25h2v3h-2zM7 30h2v3h-2zM26 35h2v3h-2zM31 35h2v3h-2zM27 40h2v3h-2zM36 40h2v3h-2zM45 40h3v2h-3zM23 45h3v2h-3z"/><path fill="#ac9c98" d="M28 0h2v3h-2zM41 0h2v3h-2zM19 5h2v2h-2zM38 15h2v2h-2zM2 20h2v3h-2zM39 20h2v2h-2zM3 30h3v2h-3zM12 30h2v3h-2zM26 30h2v3h-2zM40 30h2v2h-2zM44 30h2v3h-2zM40 40h2v3h-2zM4 45h2v3h-2zM0 45h2v2h-2z"/><path fill="#b0a0a6" d="M0 5h2v3h-2zM10 5h3v2h-3zM14 5h2v2h-2zM6 10h3v2h-3zM1 15h2v2h-2zM15 15h2v2h-2zM6 20h2v3h-2zM11 20h2v2h-2zM2 25h2v3h-2zM16 25h3v2h-3zM17 30h2v2h-2zM30 30h2v3h-2zM3 35h3v2h-3zM8 35h2v2h-2zM22 35h3v2h-3zM8 40h2v3h-2zM13 40h3v2h-3zM13 45h2v2h-2zM18 45h2v3h-2zM32 45h3v2h-3zM36 45h2v2h-2zM41 45h2v2h-2z"/></pattern><pattern id="pw3" width="46" height="50" patternUnits="userSpaceOnUse"><path fill="#b0a0a6" d="M0 0h3v3h-3zM5 5h2v3h-2zM28 5h3v3h-3zM10 10h2v3h-2zM24 10h2v3h-2zM34 20h2v3h-2zM21 25h3v3h-3zM21 30h3v3h-3zM3 35h2v3h-2zM35 35h2v3h-2zM13 40h3v3h-3zM27 40h2v3h-2zM40 40h3v3h-3zM18 45h2v3h-2z"/><path fill="#ac9c98" d="M5 0h2v3h-2zM28 0h2v3h-2zM32 0h2v3h-2zM37 0h2v3h-2zM41 0h2v3h-2zM0 5h2v3h-2zM10 5h2v3h-2zM1 15h2v3h-2zM6 15h3v3h-3zM15 15h3v3h-3zM2 20h2v3h-2zM11 20h2v3h-2zM26 30h2v3h-2zM35 30h2v3h-2zM8 35h2v3h-2zM26 35h2v3h-2zM17 40h3v3h-3zM31 40h2v3h-2zM41 45h2v3h-2z"/><path fill="#b4a4a8" d="M9 0h2v3h-2zM18 0h2v3h-2zM33 5h3v3h-3zM1 10h2v3h-2zM29 10h2v3h-2zM29 15h2v3h-2zM38 15h2v3h-2zM2 25h2v3h-2zM12 25h2v3h-2zM16 25h3v3h-3zM44 30h3v3h-3zM17 35h2v3h-2zM40 35h3v3h-3zM4 40h3v3h-3zM8 40h3v3h-3zM36 40h3v3h-3z"/><path fill="#a49490" d="M14 0h2v3h-2zM14 5h2v3h-2zM19 5h3v3h-3zM37 5h3v3h-3zM42 5h2v3h-2zM15 10h3v3h-3zM19 10h2v3h-2zM38 10h3v3h-3zM6 20h2v3h-2zM20 20h2v3h-2zM43 20h3v3h-3zM7 25h2v3h-2zM30 25h3v3h-3zM39 25h2v3h-2zM12 30h3v3h-3zM17 30h2v3h-2zM12 35h2v3h-2zM31 35h2v3h-2zM45 35h3v3h-3zM22 40h3v3h-3zM4 45h2v3h-2zM9 45h2v3h-2zM13 45h2v3h-2zM23 45h3v3h-3zM32 45h3v3h-3zM36 45h2v3h-2zM0 45h2v3h-2z"/><path fill="#bcacb0" d="M23 0h2v3h-2zM23 5h2v3h-2zM6 10h2v3h-2zM33 10h2v3h-2zM42 10h3v3h-3zM11 15h2v3h-2zM20 15h2v3h-2zM43 15h3v3h-3zM25 20h2v3h-2zM29 20h2v3h-2zM39 20h2v3h-2zM25 25h3v3h-3zM34 25h3v3h-3zM44 25h3v3h-3zM3 30h2v3h-2zM7 30h3v3h-3zM30 30h2v3h-2zM40 30h2v3h-2zM22 35h2v3h-2zM45 40h2v3h-2zM27 45h2v3h-2z"/></pattern><pattern id="pso" width="44" height="44" patternUnits="userSpaceOnUse"><path fill="#8e8078" d="M0 0h3v2h-3zM22 0h2v2h-2zM6 6h2v2h-2zM38 6h2v2h-2zM0 11h2v2h-2zM11 11h2v2h-2zM16 11h3v2h-3zM6 16h2v3h-2zM11 16h2v3h-2zM16 16h2v2h-2zM22 22h2v3h-2zM28 22h2v3h-2zM0 28h2v3h-2zM6 28h2v2h-2zM6 33h3v2h-3zM0 38h2v2h-2zM38 38h2v2h-2z"/><path fill="#988a88" d="M6 0h2v3h-2zM11 0h3v2h-3zM16 0h2v2h-2zM11 6h2v3h-2zM0 16h3v2h-3zM38 16h2v3h-2zM11 22h2v3h-2zM38 22h2v3h-2zM16 28h2v2h-2zM33 28h2v2h-2zM11 33h2v2h-2z"/><path fill="#a49494" d="M33 0h2v3h-2zM38 0h2v2h-2zM0 6h2v3h-2zM16 6h3v2h-3zM6 11h2v2h-2zM33 11h3v2h-3zM38 11h2v2h-2zM22 16h2v3h-2zM28 16h2v2h-2zM33 16h3v2h-3zM6 22h3v2h-3zM11 28h2v2h-2zM0 33h2v3h-2zM16 33h2v3h-2zM28 33h2v3h-2zM38 33h2v2h-2zM11 38h2v2h-2zM16 38h2v2h-2zM28 38h3v2h-3zM33 38h3v2h-3z"/><path fill="#ac9ea0" d="M22 6h3v2h-3zM28 6h2v2h-2zM33 6h2v3h-2zM22 11h2v3h-2zM28 11h2v2h-2zM0 22h2v2h-2zM16 22h2v2h-2zM33 22h2v3h-2zM22 28h3v2h-3zM28 28h3v2h-3zM38 28h2v2h-2zM22 33h3v2h-3zM33 33h3v2h-3zM6 38h2v2h-2zM22 38h2v3h-2z"/></pattern><pattern id="ps" width="49" height="49" patternUnits="userSpaceOnUse"><path fill="#6a5848" d="M0 0h1v2h-1zM28 0h2v1h-2zM7 14h2v1h-2zM35 14h1v2h-1zM42 21h1v2h-1zM21 28h2v2h-2zM14 35h1v2h-1zM21 35h2v2h-2zM0 42h2v1h-2zM28 42h1v2h-1z"/><path fill="#806c58" d="M7 0h1v2h-1zM0 7h2v2h-2zM7 7h2v2h-2zM28 7h2v2h-2zM0 14h2v1h-2zM14 14h1v2h-1zM21 14h2v1h-2zM42 14h2v1h-2zM0 21h2v1h-2zM21 21h1v2h-1zM28 21h1v2h-1zM0 28h1v2h-1zM14 28h1v2h-1zM28 28h2v1h-2z"/><path fill="#8c7864" d="M14 0h1v2h-1zM21 0h1v2h-1zM14 7h1v2h-1zM42 7h2v1h-2zM28 14h2v2h-2zM7 21h2v2h-2zM14 21h1v2h-1zM7 28h1v2h-1zM35 28h1v2h-1zM0 35h1v2h-1zM35 35h1v2h-1zM42 35h1v2h-1zM7 42h2v2h-2zM42 42h1v2h-1z"/><path fill="#74604c" d="M42 0h1v2h-1zM21 7h1v2h-1zM42 28h2v2h-2zM28 35h1v2h-1zM14 42h1v2h-1z"/></pattern><pattern id="psd" width="42" height="42" patternUnits="userSpaceOnUse"><path fill="#2a1810" d="M0 0h2v2h-2zM6 0h2v2h-2zM6 18h1v2h-1zM24 18h1v2h-1zM24 24h1v2h-1zM18 30h2v2h-2zM36 30h1v2h-1zM6 36h2v2h-2zM18 36h2v2h-2z"/><path fill="#5a3a28" d="M12 0h2v2h-2zM6 6h1v2h-1zM30 6h1v2h-1zM24 12h1v2h-1zM0 24h2v2h-2zM0 30h1v2h-1zM36 36h2v2h-2z"/><path fill="#4a2a1a" d="M18 0h2v2h-2zM24 0h2v2h-2zM36 0h1v2h-1zM24 6h2v2h-2zM36 6h1v2h-1zM0 12h2v2h-2zM36 12h2v2h-2zM30 18h2v2h-2zM12 24h2v2h-2zM36 24h1v2h-1zM6 30h1v2h-1zM24 30h2v2h-2z"/><path fill="#3a2018" d="M0 6h2v2h-2zM12 6h2v2h-2zM18 12h2v2h-2zM30 12h1v2h-1zM18 18h1v2h-1zM36 18h1v2h-1zM6 24h2v2h-2zM18 24h1v2h-1zM30 24h2v2h-2zM0 36h2v2h-2zM30 36h1v2h-1z"/></pattern><pattern id="psl" width="48" height="48" patternUnits="userSpaceOnUse"><path fill="#c0b0a0" d="M0 0h2v1h-2zM18 0h2v1h-2zM24 6h1v2h-1zM30 6h1v2h-1zM0 12h2v2h-2zM12 12h1v2h-1zM42 12h2v1h-2zM0 18h2v1h-2zM24 18h1v2h-1zM36 18h2v1h-2zM0 24h2v2h-2zM6 24h2v1h-2zM36 24h2v1h-2zM12 36h2v1h-2zM18 36h1v2h-1zM30 36h1v2h-1zM36 36h2v1h-2zM42 36h2v1h-2zM12 42h1v2h-1z"/><path fill="#b0a090" d="M6 0h2v1h-2zM12 0h2v1h-2zM24 0h1v2h-1zM18 12h2v1h-2zM18 18h1v2h-1zM12 24h1v2h-1zM30 24h2v2h-2zM42 24h2v1h-2zM12 30h1v2h-1zM36 30h1v2h-1zM0 36h1v2h-1zM6 36h2v2h-2zM6 42h1v2h-1zM30 42h1v2h-1zM36 42h1v2h-1zM42 42h2v1h-2z"/><path fill="#a09080" d="M36 0h1v2h-1zM0 6h2v2h-2zM6 6h2v1h-2zM12 6h2v1h-2zM36 6h1v2h-1zM6 12h2v1h-2zM24 12h2v2h-2zM30 12h2v2h-2zM6 18h1v2h-1zM12 18h1v2h-1zM42 18h2v2h-2zM24 24h1v2h-1zM0 30h1v2h-1zM24 30h2v2h-2zM30 30h1v2h-1zM42 30h2v1h-2zM0 42h1v2h-1zM18 42h2v1h-2zM24 42h1v2h-1z"/></pattern><pattern id="pbr" width="40" height="40" patternUnits="userSpaceOnUse"><path fill="#5e4c3e" d="M0 0h2v2h-2zM36 0h2v2h-2zM14 3h2v2h-2zM18 3h2v2h-2zM22 3h2v2h-2zM30 3h2v2h-2zM20 6h2v2h-2zM28 6h2v2h-2zM10 15h2v2h-2zM12 18h2v2h-2zM16 18h2v2h-2zM36 18h2v2h-2zM30 22h2v2h-2zM20 25h2v2h-2zM6 28h2v2h-2zM18 28h2v2h-2zM22 28h2v2h-2zM30 28h2v2h-2zM8 31h2v2h-2zM12 31h2v2h-2zM20 31h2v2h-2zM24 31h2v2h-2zM18 34h2v2h-2zM34 34h2v2h-2zM0 37h2v2h-2zM36 37h2v2h-2z"/><path fill="#6e5a4a" d="M4 0h2v2h-2zM20 0h2v2h-2zM24 0h2v2h-2zM0 6h2v2h-2zM6 9h2v2h-2zM22 9h2v2h-2zM4 12h2v2h-2zM12 12h2v2h-2zM2 15h2v2h-2zM10 22h2v2h-2zM26 22h2v2h-2zM34 22h2v2h-2zM38 22h2v2h-2zM4 25h2v2h-2zM12 25h2v2h-2zM34 28h2v2h-2zM0 31h2v2h-2zM6 34h2v2h-2zM20 37h2v2h-2z"/><path fill="#4a3c34" d="M8 0h2v2h-2zM12 0h2v2h-2zM16 0h2v2h-2zM28 0h2v2h-2zM32 0h2v2h-2zM2 3h2v2h-2zM26 3h2v2h-2zM34 3h2v2h-2zM4 6h2v2h-2zM8 6h2v2h-2zM38 9h2v2h-2zM36 12h2v2h-2zM20 18h2v2h-2zM32 18h2v2h-2zM2 22h2v2h-2zM14 22h2v2h-2zM0 25h2v2h-2zM16 31h2v2h-2zM2 34h2v2h-2zM4 37h2v2h-2z"/><path fill="#8a7868" d="M10 3h2v2h-2zM16 6h2v2h-2zM10 9h2v2h-2zM18 9h2v2h-2zM20 12h2v2h-2zM24 12h2v2h-2zM32 12h2v2h-2zM14 15h2v2h-2zM18 15h2v2h-2zM38 15h2v2h-2zM4 18h2v2h-2zM28 18h2v2h-2zM18 22h2v2h-2zM22 22h2v2h-2zM28 25h2v2h-2zM32 25h2v2h-2zM2 28h2v2h-2zM38 34h2v2h-2z"/><path fill="#7e6c5c" d="M38 3h2v2h-2zM12 6h2v2h-2zM32 6h2v2h-2zM36 6h2v2h-2zM14 9h2v2h-2zM30 9h2v2h-2zM34 9h2v2h-2zM16 12h2v2h-2zM6 15h2v2h-2zM22 15h2v2h-2zM24 18h2v2h-2zM24 25h2v2h-2zM10 28h2v2h-2zM4 31h2v2h-2zM22 34h2v2h-2zM26 34h2v2h-2zM12 37h2v2h-2z"/></pattern><pattern id="pb" width="40" height="40" patternUnits="userSpaceOnUse"><path fill="#4a3020" d="M0 0h2v2h-2zM20 0h2v2h-2zM28 0h2v2h-2zM0 4h2v2h-2zM4 4h2v2h-2zM16 4h2v2h-2zM20 8h2v2h-2zM32 8h2v2h-2zM32 12h2v2h-2zM36 12h2v2h-2zM12 16h2v2h-2zM28 16h2v2h-2zM0 24h2v2h-2zM28 24h2v2h-2zM32 24h2v2h-2zM8 28h2v2h-2zM20 28h2v2h-2zM36 28h2v2h-2zM12 32h2v2h-2zM28 32h2v2h-2zM36 32h2v2h-2zM32 36h2v2h-2z"/><path fill="#8a5a20" d="M4 0h2v2h-2zM16 0h2v2h-2zM12 4h2v2h-2zM20 4h2v2h-2zM24 4h2v2h-2zM0 8h2v2h-2zM0 16h2v2h-2zM8 16h2v2h-2zM32 16h2v2h-2zM36 16h2v2h-2zM0 20h2v2h-2zM20 20h2v2h-2zM20 24h2v2h-2zM16 28h2v2h-2zM32 28h2v2h-2zM24 32h2v2h-2zM16 36h2v2h-2z"/><path fill="#6a4018" d="M8 0h2v2h-2zM32 0h2v2h-2zM4 8h2v2h-2zM36 8h2v2h-2zM16 12h2v2h-2zM4 16h2v2h-2zM16 16h2v2h-2zM20 16h2v2h-2zM12 20h2v2h-2zM24 24h2v2h-2zM0 28h2v2h-2zM24 28h2v2h-2zM8 32h2v2h-2zM16 32h2v2h-2z"/><path fill="#7a5030" d="M12 0h2v2h-2zM24 0h2v2h-2zM28 4h2v2h-2zM32 4h2v2h-2zM36 4h2v2h-2zM8 8h2v2h-2zM12 8h2v2h-2zM24 8h2v2h-2zM4 12h2v2h-2zM8 12h2v2h-2zM12 12h2v2h-2zM24 16h2v2h-2zM4 20h2v2h-2zM8 20h2v2h-2zM28 20h2v2h-2zM4 24h2v2h-2zM8 24h2v2h-2zM36 24h2v2h-2zM4 28h2v2h-2zM28 28h2v2h-2zM0 32h2v2h-2zM4 32h2v2h-2zM20 32h2v2h-2zM24 36h2v2h-2zM36 36h2v2h-2z"/><path fill="#a0702a" d="M36 0h2v2h-2zM8 4h2v2h-2zM16 8h2v2h-2zM28 8h2v2h-2zM0 12h2v2h-2zM20 12h2v2h-2zM24 12h2v2h-2zM28 12h2v2h-2zM24 20h2v2h-2zM32 20h2v2h-2zM36 20h2v2h-2zM12 24h2v2h-2zM12 28h2v2h-2zM32 32h2v2h-2zM4 36h2v2h-2zM8 36h2v2h-2zM12 36h2v2h-2zM20 36h2v2h-2zM28 36h2v2h-2z"/></pattern><pattern id="pc" width="36" height="36" patternUnits="userSpaceOnUse"><path fill="#b0a2ac" d="M0 0h2v2h-2zM15 2h2v2h-2zM21 2h2v2h-2zM27 6h2v2h-2zM15 8h2v2h-2zM27 8h2v2h-2zM18 10h2v2h-2zM21 10h2v2h-2zM15 12h2v2h-2zM21 12h2v2h-2zM0 14h2v2h-2zM21 16h2v2h-2zM33 18h2v2h-2zM9 20h2v2h-2zM12 22h2v2h-2zM18 22h2v2h-2zM30 22h2v2h-2zM33 22h2v2h-2zM3 24h2v2h-2zM9 24h2v2h-2zM18 24h2v2h-2zM24 24h2v2h-2zM15 28h2v2h-2zM24 28h2v2h-2zM33 28h2v2h-2zM18 30h2v2h-2zM21 30h2v2h-2zM12 32h2v2h-2zM24 32h2v2h-2zM30 32h2v2h-2zM3 34h2v2h-2zM30 34h2v2h-2z"/><path fill="#928490" d="M3 0h2v2h-2zM27 0h2v2h-2zM9 2h2v2h-2zM24 2h2v2h-2zM0 4h2v2h-2zM12 4h2v2h-2zM24 4h2v2h-2zM33 4h2v2h-2zM9 6h2v2h-2zM6 8h2v2h-2zM3 10h2v2h-2zM9 10h2v2h-2zM24 10h2v2h-2zM27 10h2v2h-2zM12 12h2v2h-2zM27 12h2v2h-2zM33 12h2v2h-2zM12 14h2v2h-2zM18 14h2v2h-2zM21 14h2v2h-2zM30 14h2v2h-2zM24 16h2v2h-2zM12 18h2v2h-2zM24 20h2v2h-2zM27 20h2v2h-2zM30 20h2v2h-2zM15 22h2v2h-2zM0 24h2v2h-2zM21 26h2v2h-2zM24 26h2v2h-2zM12 28h2v2h-2zM30 28h2v2h-2zM0 30h2v2h-2zM15 30h2v2h-2zM30 30h2v2h-2zM18 32h2v2h-2zM21 32h2v2h-2zM33 32h2v2h-2zM12 34h2v2h-2z"/><path fill="#a0929e" d="M6 0h2v2h-2zM12 0h2v2h-2zM30 0h2v2h-2zM3 2h2v2h-2zM27 2h2v2h-2zM30 2h2v2h-2zM3 4h2v2h-2zM15 4h2v2h-2zM18 4h2v2h-2zM30 4h2v2h-2zM3 6h2v2h-2zM33 6h2v2h-2zM0 8h2v2h-2zM18 8h2v2h-2zM24 8h2v2h-2zM30 8h2v2h-2zM6 10h2v2h-2zM33 10h2v2h-2zM6 12h2v2h-2zM18 12h2v2h-2zM24 12h2v2h-2zM6 14h2v2h-2zM15 14h2v2h-2zM3 16h2v2h-2zM15 16h2v2h-2zM27 16h2v2h-2zM0 18h2v2h-2zM3 18h2v2h-2zM18 18h2v2h-2zM24 18h2v2h-2zM30 18h2v2h-2zM3 20h2v2h-2zM6 20h2v2h-2zM21 20h2v2h-2zM33 20h2v2h-2zM0 22h2v2h-2zM3 22h2v2h-2zM9 22h2v2h-2zM24 22h2v2h-2zM6 24h2v2h-2zM0 26h2v2h-2zM15 26h2v2h-2zM6 28h2v2h-2zM3 30h2v2h-2zM33 30h2v2h-2zM0 32h2v2h-2zM27 32h2v2h-2zM0 34h2v2h-2z"/><path fill="#84767e" d="M9 0h2v2h-2zM18 0h2v2h-2zM21 0h2v2h-2zM0 2h2v2h-2zM12 2h2v2h-2zM33 2h2v2h-2zM27 4h2v2h-2zM18 6h2v2h-2zM12 8h2v2h-2zM21 8h2v2h-2zM0 10h2v2h-2zM12 10h2v2h-2zM0 12h2v2h-2zM3 12h2v2h-2zM30 12h2v2h-2zM24 14h2v2h-2zM30 16h2v2h-2zM33 16h2v2h-2zM6 18h2v2h-2zM21 18h2v2h-2zM12 20h2v2h-2zM15 20h2v2h-2zM27 22h2v2h-2zM12 24h2v2h-2zM27 24h2v2h-2zM30 24h2v2h-2zM33 24h2v2h-2zM3 26h2v2h-2zM9 26h2v2h-2zM12 26h2v2h-2zM30 26h2v2h-2zM0 28h2v2h-2zM21 28h2v2h-2zM6 30h2v2h-2zM9 30h2v2h-2zM24 30h2v2h-2zM6 32h2v2h-2zM9 34h2v2h-2zM27 34h2v2h-2zM33 34h2v2h-2z"/><path fill="#b8acb4" d="M15 0h2v2h-2zM33 0h2v2h-2zM9 4h2v2h-2zM21 4h2v2h-2zM0 6h2v2h-2zM6 6h2v2h-2zM12 6h2v2h-2zM24 6h2v2h-2zM30 6h2v2h-2zM3 8h2v2h-2zM9 8h2v2h-2zM33 8h2v2h-2zM15 10h2v2h-2zM3 14h2v2h-2zM27 14h2v2h-2zM33 14h2v2h-2zM6 16h2v2h-2zM9 16h2v2h-2zM12 16h2v2h-2zM18 16h2v2h-2zM9 18h2v2h-2zM15 18h2v2h-2zM27 18h2v2h-2zM0 20h2v2h-2zM6 22h2v2h-2zM6 26h2v2h-2zM18 26h2v2h-2zM3 28h2v2h-2zM9 28h2v2h-2zM18 28h2v2h-2zM12 30h2v2h-2zM27 30h2v2h-2zM3 32h2v2h-2zM15 32h2v2h-2zM6 34h2v2h-2zM15 34h2v2h-2zM18 34h2v2h-2z"/></pattern><pattern id="pstr" width="36" height="36" patternUnits="userSpaceOnUse"><path fill="#c0b4bc" d="M3 0h2v2h-2zM9 0h2v2h-2zM12 0h2v2h-2zM33 0h2v2h-2zM15 2h2v2h-2zM24 2h2v2h-2zM27 2h2v2h-2zM9 4h2v2h-2zM12 4h2v2h-2zM15 4h2v2h-2zM24 4h2v2h-2zM9 6h2v2h-2zM21 6h2v2h-2zM0 8h2v2h-2zM3 8h2v2h-2zM12 8h2v2h-2zM18 8h2v2h-2zM33 8h2v2h-2zM0 10h2v2h-2zM3 10h2v2h-2zM9 10h2v2h-2zM21 10h2v2h-2zM27 10h2v2h-2zM30 10h2v2h-2zM33 10h2v2h-2zM9 12h2v2h-2zM12 12h2v2h-2zM18 12h2v2h-2zM27 12h2v2h-2zM30 12h2v2h-2zM6 14h2v2h-2zM9 14h2v2h-2zM12 14h2v2h-2zM15 14h2v2h-2zM21 14h2v2h-2zM3 16h2v2h-2zM9 16h2v2h-2zM12 16h2v2h-2zM15 16h2v2h-2zM24 16h2v2h-2zM0 18h2v2h-2zM18 18h2v2h-2zM30 18h2v2h-2zM15 20h2v2h-2zM27 20h2v2h-2zM30 20h2v2h-2zM0 22h2v2h-2zM3 22h2v2h-2zM21 22h2v2h-2zM33 22h2v2h-2zM3 24h2v2h-2zM18 24h2v2h-2zM21 24h2v2h-2zM3 26h2v2h-2zM9 26h2v2h-2zM12 26h2v2h-2zM18 26h2v2h-2zM3 28h2v2h-2zM6 28h2v2h-2zM9 28h2v2h-2zM12 28h2v2h-2zM30 28h2v2h-2zM3 30h2v2h-2zM12 30h2v2h-2zM18 30h2v2h-2zM30 30h2v2h-2zM12 32h2v2h-2zM15 32h2v2h-2zM27 32h2v2h-2zM12 34h2v2h-2zM15 34h2v2h-2zM21 34h2v2h-2z"/><path fill="#b0a2ae" d="M6 0h2v2h-2zM27 0h2v2h-2zM0 2h2v2h-2zM18 2h2v2h-2zM21 2h2v2h-2zM30 2h2v2h-2zM0 4h2v2h-2zM0 6h2v2h-2zM12 6h2v2h-2zM15 6h2v2h-2zM18 6h2v2h-2zM27 6h2v2h-2zM30 6h2v2h-2zM6 8h2v2h-2zM9 8h2v2h-2zM27 8h2v2h-2zM12 10h2v2h-2zM18 10h2v2h-2zM24 10h2v2h-2zM3 12h2v2h-2zM15 12h2v2h-2zM21 12h2v2h-2zM0 14h2v2h-2zM0 16h2v2h-2zM6 16h2v2h-2zM18 16h2v2h-2zM21 16h2v2h-2zM27 16h2v2h-2zM30 16h2v2h-2zM33 16h2v2h-2zM3 18h2v2h-2zM21 18h2v2h-2zM27 18h2v2h-2zM18 20h2v2h-2zM33 20h2v2h-2zM18 22h2v2h-2zM30 22h2v2h-2zM0 24h2v2h-2zM9 24h2v2h-2zM6 26h2v2h-2zM15 26h2v2h-2zM30 26h2v2h-2zM0 28h2v2h-2zM15 28h2v2h-2zM18 28h2v2h-2zM21 28h2v2h-2zM6 30h2v2h-2zM24 30h2v2h-2zM27 30h2v2h-2zM0 32h2v2h-2zM3 32h2v2h-2zM6 32h2v2h-2zM18 32h2v2h-2zM24 32h2v2h-2zM30 32h2v2h-2zM33 32h2v2h-2zM30 34h2v2h-2z"/><path fill="#a0929c" d="M18 0h2v2h-2zM21 0h2v2h-2zM24 0h2v2h-2zM30 0h2v2h-2zM3 2h2v2h-2zM6 2h2v2h-2zM9 2h2v2h-2zM12 2h2v2h-2zM33 2h2v2h-2zM3 4h2v2h-2zM6 4h2v2h-2zM18 4h2v2h-2zM21 4h2v2h-2zM27 4h2v2h-2zM30 4h2v2h-2zM33 4h2v2h-2zM3 6h2v2h-2zM6 6h2v2h-2zM24 6h2v2h-2zM33 6h2v2h-2zM15 8h2v2h-2zM21 8h2v2h-2zM24 8h2v2h-2zM30 8h2v2h-2zM6 10h2v2h-2zM15 10h2v2h-2zM0 12h2v2h-2zM6 12h2v2h-2zM24 12h2v2h-2zM33 12h2v2h-2zM18 14h2v2h-2zM27 14h2v2h-2zM30 14h2v2h-2zM33 14h2v2h-2zM6 18h2v2h-2zM9 18h2v2h-2zM12 18h2v2h-2zM15 18h2v2h-2zM24 18h2v2h-2zM0 20h2v2h-2zM3 20h2v2h-2zM6 20h2v2h-2zM9 20h2v2h-2zM12 20h2v2h-2zM21 20h2v2h-2zM24 20h2v2h-2zM6 22h2v2h-2zM9 22h2v2h-2zM12 22h2v2h-2zM15 22h2v2h-2zM24 22h2v2h-2zM27 22h2v2h-2zM12 24h2v2h-2zM15 24h2v2h-2zM24 24h2v2h-2zM27 24h2v2h-2zM30 24h2v2h-2zM33 24h2v2h-2zM21 26h2v2h-2zM24 26h2v2h-2zM27 26h2v2h-2zM33 26h2v2h-2zM24 28h2v2h-2zM27 28h2v2h-2zM33 28h2v2h-2zM0 30h2v2h-2zM9 30h2v2h-2zM15 30h2v2h-2zM21 30h2v2h-2zM33 30h2v2h-2zM9 32h2v2h-2zM21 32h2v2h-2zM6 34h2v2h-2zM9 34h2v2h-2zM18 34h2v2h-2zM24 34h2v2h-2zM33 34h2v2h-2z"/></pattern><pattern id="ph" width="36" height="36" patternUnits="userSpaceOnUse"><path fill="#ffffff" d="M0 0h2v2h-2zM3 0h2v2h-2zM6 0h2v2h-2zM12 0h2v2h-2zM27 0h2v2h-2zM9 2h2v2h-2zM24 2h2v2h-2zM3 4h2v2h-2zM15 4h2v2h-2zM24 4h2v2h-2zM33 4h2v2h-2zM6 6h2v2h-2zM15 6h2v2h-2zM21 6h2v2h-2zM24 6h2v2h-2zM0 8h2v2h-2zM15 8h2v2h-2zM24 8h2v2h-2zM30 8h2v2h-2zM0 10h2v2h-2zM3 10h2v2h-2zM6 10h2v2h-2zM12 10h2v2h-2zM15 10h2v2h-2zM18 10h2v2h-2zM21 10h2v2h-2zM27 10h2v2h-2zM9 12h2v2h-2zM12 12h2v2h-2zM21 12h2v2h-2zM27 12h2v2h-2zM33 12h2v2h-2zM21 14h2v2h-2zM27 14h2v2h-2zM0 16h2v2h-2zM6 16h2v2h-2zM12 16h2v2h-2zM15 16h2v2h-2zM33 16h2v2h-2zM6 18h2v2h-2zM15 18h2v2h-2zM27 18h2v2h-2zM0 20h2v2h-2zM15 20h2v2h-2zM18 20h2v2h-2zM15 22h2v2h-2zM21 22h2v2h-2zM0 24h2v2h-2zM6 24h2v2h-2zM12 24h2v2h-2zM18 24h2v2h-2zM27 24h2v2h-2zM30 24h2v2h-2zM33 24h2v2h-2zM9 26h2v2h-2zM27 26h2v2h-2zM30 26h2v2h-2zM3 28h2v2h-2zM9 28h2v2h-2zM15 28h2v2h-2zM18 28h2v2h-2zM24 28h2v2h-2zM27 28h2v2h-2zM0 30h2v2h-2zM21 30h2v2h-2zM24 30h2v2h-2zM0 32h2v2h-2zM3 32h2v2h-2zM6 32h2v2h-2zM15 32h2v2h-2zM33 32h2v2h-2zM0 34h2v2h-2zM3 34h2v2h-2zM6 34h2v2h-2zM12 34h2v2h-2zM15 34h2v2h-2zM21 34h2v2h-2zM24 34h2v2h-2zM33 34h2v2h-2z"/><path fill="#f4eef4" d="M9 0h2v2h-2zM15 0h2v2h-2zM24 0h2v2h-2zM0 2h2v2h-2zM3 2h2v2h-2zM12 2h2v2h-2zM18 2h2v2h-2zM33 2h2v2h-2zM21 4h2v2h-2zM27 4h2v2h-2zM12 6h2v2h-2zM3 8h2v2h-2zM12 8h2v2h-2zM18 8h2v2h-2zM27 8h2v2h-2zM9 10h2v2h-2zM33 10h2v2h-2zM3 12h2v2h-2zM18 12h2v2h-2zM3 14h2v2h-2zM12 14h2v2h-2zM9 16h2v2h-2zM21 16h2v2h-2zM18 18h2v2h-2zM9 20h2v2h-2zM33 20h2v2h-2zM18 22h2v2h-2zM3 26h2v2h-2zM12 26h2v2h-2zM15 26h2v2h-2zM18 26h2v2h-2zM24 26h2v2h-2zM33 26h2v2h-2zM0 28h2v2h-2zM12 28h2v2h-2zM12 30h2v2h-2zM18 30h2v2h-2zM30 30h2v2h-2zM9 32h2v2h-2zM21 32h2v2h-2zM24 32h2v2h-2zM27 32h2v2h-2zM9 34h2v2h-2zM18 34h2v2h-2z"/><path fill="#e8dfe6" d="M21 0h2v2h-2zM30 0h2v2h-2zM33 0h2v2h-2zM15 2h2v2h-2zM18 4h2v2h-2zM0 6h2v2h-2zM9 6h2v2h-2zM18 6h2v2h-2zM27 6h2v2h-2zM30 6h2v2h-2zM6 8h2v2h-2zM24 10h2v2h-2zM0 12h2v2h-2zM18 14h2v2h-2zM18 16h2v2h-2zM24 16h2v2h-2zM27 16h2v2h-2zM0 18h2v2h-2zM3 18h2v2h-2zM30 18h2v2h-2zM33 18h2v2h-2zM6 22h2v2h-2zM24 22h2v2h-2zM33 22h2v2h-2zM3 24h2v2h-2zM21 24h2v2h-2zM6 26h2v2h-2zM30 28h2v2h-2zM9 30h2v2h-2zM27 30h2v2h-2zM12 32h2v2h-2zM30 34h2v2h-2z"/><path fill="#7a6a70" d="M21 2h2v2h-2zM27 2h2v2h-2zM30 2h2v2h-2zM6 4h2v2h-2zM9 4h2v2h-2zM3 6h2v2h-2zM33 6h2v2h-2zM9 8h2v2h-2zM21 8h2v2h-2zM30 10h2v2h-2zM6 12h2v2h-2zM24 12h2v2h-2zM0 14h2v2h-2zM9 14h2v2h-2zM24 14h2v2h-2zM30 14h2v2h-2zM33 14h2v2h-2zM3 16h2v2h-2zM30 16h2v2h-2zM9 18h2v2h-2zM12 18h2v2h-2zM3 20h2v2h-2zM6 20h2v2h-2zM12 20h2v2h-2zM24 20h2v2h-2zM30 20h2v2h-2zM0 22h2v2h-2zM3 22h2v2h-2zM9 22h2v2h-2zM12 22h2v2h-2zM30 22h2v2h-2zM9 24h2v2h-2zM21 26h2v2h-2zM33 28h2v2h-2zM3 30h2v2h-2zM6 30h2v2h-2zM33 30h2v2h-2zM30 32h2v2h-2zM27 34h2v2h-2z"/></pattern><pattern id="pst" width="36" height="36" patternUnits="userSpaceOnUse"><path fill="#d8d8d8" d="M0 0h3v2h-3zM6 3h3v2h-3zM14 3h3v2h-3zM8 6h3v2h-3zM16 6h3v2h-3zM32 6h3v2h-3zM26 9h3v2h-3zM30 9h3v2h-3zM0 12h3v2h-3zM24 12h3v2h-3zM18 15h3v2h-3zM14 21h3v2h-3zM26 21h3v2h-3zM0 24h3v2h-3zM20 24h3v2h-3zM24 24h3v2h-3zM18 27h3v2h-3zM4 30h3v2h-3zM32 30h3v2h-3zM22 33h3v2h-3zM26 33h3v2h-3z"/><path fill="#ffffff" d="M8 0h3v2h-3zM16 0h3v2h-3zM28 0h3v2h-3zM10 3h3v2h-3zM18 3h3v2h-3zM22 3h3v2h-3zM12 6h3v2h-3zM20 6h3v2h-3zM14 9h3v2h-3zM18 9h3v2h-3zM22 9h3v2h-3zM34 9h3v2h-3zM16 12h3v2h-3zM32 12h3v2h-3zM6 15h3v2h-3zM30 15h3v2h-3zM4 18h3v2h-3zM12 18h3v2h-3zM28 18h3v2h-3zM10 21h3v2h-3zM2 27h3v2h-3zM6 27h3v2h-3zM10 27h3v2h-3zM26 27h3v2h-3zM0 30h3v2h-3zM8 30h3v2h-3zM12 30h3v2h-3zM14 33h3v2h-3zM30 33h3v2h-3z"/><path fill="#f0f0f0" d="M12 0h3v2h-3zM20 0h3v2h-3zM24 0h3v2h-3zM32 0h3v2h-3zM2 3h3v2h-3zM26 3h3v2h-3zM30 3h3v2h-3zM34 3h3v2h-3zM0 6h3v2h-3zM2 9h3v2h-3zM6 9h3v2h-3zM4 12h3v2h-3zM8 12h3v2h-3zM12 12h3v2h-3zM20 12h3v2h-3zM2 15h3v2h-3zM14 15h3v2h-3zM22 15h3v2h-3zM26 15h3v2h-3zM34 15h3v2h-3zM8 18h3v2h-3zM16 18h3v2h-3zM20 18h3v2h-3zM2 21h3v2h-3zM22 21h3v2h-3zM8 24h3v2h-3zM12 24h3v2h-3zM16 24h3v2h-3zM32 24h3v2h-3zM14 27h3v2h-3zM30 27h3v2h-3zM34 27h3v2h-3zM6 33h3v2h-3zM10 33h3v2h-3z"/></pattern><pattern id="pred" width="24" height="24" patternUnits="userSpaceOnUse"><path fill="#906060" d="M0 0h2v2h-2zM4 4h2v2h-2zM20 4h2v2h-2zM4 16h2v2h-2zM8 16h2v2h-2zM20 20h2v2h-2z"/><path fill="#c03040" d="M8 0h2v2h-2zM16 0h2v2h-2zM20 0h2v2h-2zM8 4h2v2h-2zM8 12h2v2h-2zM16 12h2v2h-2zM20 12h2v2h-2zM12 16h2v2h-2z"/><path fill="#802028" d="M4 8h2v2h-2zM4 12h2v2h-2zM20 16h2v2h-2zM4 20h2v2h-2z"/><path fill="#a02030" d="M8 8h2v2h-2zM20 8h2v2h-2zM0 12h2v2h-2zM12 12h2v2h-2zM0 16h2v2h-2zM12 20h2v2h-2z"/></pattern></defs><rect x="403" y="78" width="1224" height="908" fill="#303030"/><path d="M403 203.5H1627 M403 238.5H1627 M403 285.5H1627 M403 351.5H1627 M403 451.5H1627 M403 621.5H1627 M403 969.5H1627 M231.7 203.3L-2287.4 986 M388.7 203.3L-1623.9 986 M545.7 203.3L-960.3 986 M702.7 203.3L-296.8 986 M859.7 203.3L366.7 986 M1016.7 203.3L1030.3 986 M1173.7 203.3L1693.8 986 M1330.7 203.3L2357.3 986 M1487.7 203.3L3020.8 986 M1644.7 203.3L3684.4 986 M1801.7 203.3L4347.9 986" stroke="#6a6a6c" stroke-width="1" fill="none" shape-rendering="crispEdges"/><path d="M690 165 L912 165 L912 325 L690 325 Z" fill="url(#ps)"/><path d="M905 160 L1070 160 L1070 240 L965 240 L965 468 L912 468 L912 352 L905 352 Z" fill="url(#ps)"/><path d="M965 240 L1070 240 L1070 470 L965 468 Z" fill="url(#psd)"/><path d="M1080 140 L1200 142 L1252 152 L1250 260 L1177 260 L1177 470 L1080 470 Z" fill="url(#psl)"/><path d="M1177 260 L1250 260 L1245 340 L1230 470 L1177 470 Z" fill="url(#psd)"/><path d="M1185 145 L1210 148 L1212 175 L1188 172 Z" fill="url(#pred)" opacity="0.6"/><clipPath id="cband"><path d="M540 119 L600 122 L700 131 L780 140 L900 141 L1075 143 L1180 152 L1250 168 L1250 186 L1075 166 L900 163 L780 158 L700 150 L600 140 L540 132 Z"/></clipPath><g clip-path="url(#cband)"><rect x="426" y="110" width="200" height="60" fill="url(#pstr)"/><rect x="600" y="110" width="475" height="80" fill="url(#pbr)"/></g><clipPath id="cw"><path d="M426 116 L520 118 L600 136 L677 148 L677 352 L661 359 L871 363 L875 521 L779 522 L560 537 L524 545 Z"/></clipPath><g clip-path="url(#cw)"><rect x="403" y="100" width="300" height="35" fill="url(#pw2)"/><rect x="403" y="135" width="300" height="225" fill="url(#pw2)"/><rect x="403" y="360" width="300" height="200" fill="url(#pw3)"/><rect x="661" y="359" width="230" height="170" fill="url(#pw3)"/><rect x="731" y="359" width="160" height="170" fill="#303030" opacity="0.18"/></g><path d="M600 130 L677 135 L677 352 L630 352 Z" fill="#303030" opacity="0.3"/><path d="M731 449 L804 449 L804 500 L731 500 Z" fill="#303030"/><path d="M804 449 L842 449 L842 521 L804 521 Z" fill="#303030" opacity="0.6"/><path d="M804 449 L842 449 L842 521 L804 521 Z" fill="url(#psd)"/><path d="M600 445 L731 449 L731 492 L600 495 Z" fill="#303030" opacity="0.5"/><path d="M700 440 L870 441 L870 447 L700 447 Z" fill="url(#pb)" opacity="0.7"/><path d="M561 500 L775 498 L781 539 L561 540 Z" fill="#303030"/><path d="M561 500 L775 498 L781 539 L561 540 Z" fill="url(#pb)"/><path d="M555 425 L680 365 L682 372 L560 432 Z M556 425 L563 425 L566 500 L559 500 Z" fill="url(#pb)" opacity="0.8"/><path d="M426 103 L470 98 L600 99 L760 102 L1075 100 L1075 112 L760 109 L600 106 L470 114 L426 117 Z" fill="url(#pc)"/><path d="M470 104 L560 104 L575 124 L470 120 Z" fill="url(#pstr)" opacity="0.8"/><path d="M520 106 L600 103 L760 106 L900 112 L1000 115 L1075 117 L1075 141 L1000 140 L900 135 L800 136 L760 133 L700 122 L600 117 L520 120 Z" fill="url(#ph)"/><path d="M780 110 L950 114 L940 126 L800 122 Z" fill="url(#pc)" opacity="0.9"/><path d="M1080 118 L1135 125 L1150 137 L1080 142 Z" fill="url(#pst)"/><path d="M935 182 L1090 182 L1095 203 L935 202 Z" fill="url(#psl)"/><path d="M935 186 L1090 186 L1095 200 L935 199 Z" fill="url(#pst)" opacity="0.6"/><path d="M576 180 L620 182 L680 188 L735 196 L737 206 L600 206 L580 200 Z" fill="url(#pc)"/><path d="M570 181 L576 178 L579 197 L596 203 L640 205 L640 208 L592 207 L572 200 Z" fill="#f4f4f4"/><path d="M596 140 L603 140 L605 172 L599 173 Z" fill="#f0f0f0"/><path d="M1071 101 L1080 101 L1079 550 L1072 552 Z" fill="#b0a4a6"/><path d="M978 500 L984 498 L994 538 L989 540 Z" fill="url(#psd)"/><g shape-rendering="auto"><text x="400" y="649.6" font-family="Liberation Sans" font-size="35.5" fill="#fff">/openni_rgb_optical_frame</text><text x="607" y="649.6" font-family="Liberation Sans" font-size="35.5" fill="#fff" text-anchor="middle">/map</text></g><g stroke-linecap="round" shape-rendering="auto"><path d="M514 621.5 L600 621.5" stroke="#00ff00" stroke-width="8"/><path d="M540 623 L604 623" stroke="#00ff00" stroke-width="8"/><path d="M612 623.5 L692 623.5" stroke="#ff0000" stroke-width="9"/><path d="M584.5 550 L597.5 617" stroke="#0000ff" stroke-width="9"/><path d="M598 551 L609 618" stroke="#0000ff" stroke-width="9"/><path d="M621.5 581.5 L604 614" stroke="#ff0000" stroke-width="7"/><path d="M636 582 L614 616" stroke="#0000ff" stroke-width="7"/><path d="M635 581 L612.5 616" stroke="#ff0000" stroke-width="5"/><path d="M611 631 L622 690" stroke="#00ff00" stroke-width="9"/></g></svg>
<div style="position:absolute;left:0;top:0;width:1920px;height:24px;background:linear-gradient(#57554f,#3d3c38)"></div>
<div style="position:absolute;left:6px;top:2.92px;font-family:'Liberation Sans', sans-serif;font-size:15.3px;line-height:18.36px;color:#dfdbd2;font-weight:bold;white-space:pre;">Terminal</div>
<svg style="position:absolute;left:1601px;top:5px" width="20" height="14"><rect x="0.7" y="0.7" width="18" height="12" fill="none" stroke="#dfdbd2" stroke-width="1.4"/><path d="M1 1 L10 8 L19 1 M1 13 L7.5 6.5 M19 13 L12.5 6.5" fill="none" stroke="#dfdbd2" stroke-width="1.3"/></svg>
<svg style="position:absolute;left:1633px;top:6px" width="22" height="12"><rect x="0.7" y="0.7" width="18" height="10.5" rx="1.5" fill="none" stroke="#bdb9b0" stroke-width="1.3"/><rect x="19.5" y="3.5" width="2" height="5" fill="#bdb9b0"/><path d="M11 2 L7 6.5 L10.5 6 L8.5 10 L13 5 L9.5 5.5 Z" fill="#dfdbd2"/></svg>
<svg style="position:absolute;left:1664px;top:4px" width="11" height="17"><path d="M2 5 L9 12 L5.5 15.5 L5.5 1.5 L9 5 L2 12" fill="none" stroke="#dfdbd2" stroke-width="1.4"/></svg>
<svg style="position:absolute;left:1686px;top:5px" width="21" height="15"><g fill="none" stroke="#dfdbd2" stroke-width="1.8"><path d="M2 6 Q10.5 -1 19 6"/><path d="M5 9 Q10.5 4 16 9"/><path d="M8 12 Q10.5 10 13 12"/></g><circle cx="10.5" cy="13.5" r="1.4" fill="#dfdbd2"/></svg>
<svg style="position:absolute;left:1718px;top:7px" width="19" height="11"><path d="M1 3.5 H4 L8 0.5 V10.5 L4 7.5 H1 Z" fill="#7d7b75"/><path d="M11 3 L16 8 M16 3 L11 8" stroke="#7d7b75" stroke-width="1.5"/></svg>
<div style="position:absolute;left:1754.9px;top:4.86px;font-family:'Liberation Sans', sans-serif;font-size:14.2px;line-height:17.04px;color:#dfdbd2;font-weight:normal;white-space:pre;">3:48 PM</div>
<svg style="position:absolute;left:1818px;top:5px" width="14" height="15"><circle cx="7" cy="4.5" r="3.6" fill="#dfdbd2"/><path d="M0.5 14.5 Q0.5 8 7 8 Q13.5 8 13.5 14.5 Z" fill="#dfdbd2"/></svg>
<div style="position:absolute;left:1837.3px;top:3.80px;font-family:'Liberation Sans', sans-serif;font-size:15px;line-height:18.00px;color:#dfdbd2;font-weight:normal;white-space:pre;">andrey</div>
<svg style="position:absolute;left:1895px;top:3px" width="18" height="18"><circle cx="9" cy="10" r="5.5" fill="none" stroke="#dfdbd2" stroke-width="2.6"/><g fill="#dfdbd2"><rect x="7.6" y="1.8" width="2.8" height="3.5" transform="rotate(0 9 10)"/><rect x="7.6" y="1.8" width="2.8" height="3.5" transform="rotate(45 9 10)"/><rect x="7.6" y="1.8" width="2.8" height="3.5" transform="rotate(90 9 10)"/><rect x="7.6" y="1.8" width="2.8" height="3.5" transform="rotate(135 9 10)"/><rect x="7.6" y="1.8" width="2.8" height="3.5" transform="rotate(180 9 10)"/><rect x="7.6" y="1.8" width="2.8" height="3.5" transform="rotate(225 9 10)"/><rect x="7.6" y="1.8" width="2.8" height="3.5" transform="rotate(270 9 10)"/><rect x="7.6" y="1.8" width="2.8" height="3.5" transform="rotate(315 9 10)"/></g><circle cx="9" cy="10" r="2.2" fill="#3d3c38"/></svg>
<div style="position:absolute;left:0;top:24px;width:65px;height:1056px;background:#521d35"></div>
<div style="position:absolute;left:64px;top:24px;width:1px;height:1056px;background:#2a0f1b"></div>
<div style="position:absolute;left:6px;top:30px;width:52px;height:52px;border-radius:7px;background:linear-gradient(#9a4d6d,#7b2d4f);box-shadow:inset 0 0 0 1px rgba(255,255,255,0.25)"></div>
<svg style="position:absolute;left:6px;top:30px" width="52" height="52"><circle cx="26" cy="25.5" r="15" fill="#fff"/><circle cx="26" cy="25.5" r="8.3" fill="none" stroke="#7b2d4f" stroke-width="2.8"/><g fill="#7b2d4f" stroke="#fff" stroke-width="1.3"><circle cx="31.2" cy="16.7" r="2.7"/><circle cx="15.8" cy="25.5" r="2.7"/><circle cx="31.2" cy="34.3" r="2.7"/></g></svg>
<div style="position:absolute;left:6px;top:89px;width:52px;height:52px;border-radius:7px;background:linear-gradient(#d08a5a,#b06a42);box-shadow:inset 0 0 0 1px rgba(255,255,255,0.25)"></div>
<svg style="position:absolute;left:6px;top:89px" width="52" height="52"><path d="M5 12 L24 12 L28 16 L47 16 L47 24 L5 24 Z" fill="#f4f0ec"/><rect x="8" y="13.5" width="13" height="2" fill="#e08a5a"/><path d="M5 19 L47 19 L46 47 L6 47 Z" fill="#ef8a3a"/><path d="M5 19 L47 19 L46 30 L6 34 Z" fill="#f5b070" opacity="0.6"/></svg>
<div style="position:absolute;left:6px;top:148px;width:52px;height:52px;border-radius:7px;background:linear-gradient(#5a9ad8,#2a6ab0);box-shadow:inset 0 0 0 1px rgba(255,255,255,0.25)"></div>
<svg style="position:absolute;left:6px;top:148px" width="52" height="52"><rect x="9" y="4" width="36" height="45" rx="4" fill="#1f5590"/><path d="M11 6 L35 6 L42 13 L42 46 L11 46 Z" fill="#f2f4f8"/><rect x="15" y="19" width="12" height="2" fill="#2a5a9a"/><rect x="15" y="24" width="12" height="2" fill="#2a5a9a"/><rect x="15" y="29" width="22" height="2" fill="#2a5a9a"/><rect x="15" y="34" width="22" height="2" fill="#2a5a9a"/><rect x="15" y="39" width="18" height="2" fill="#2a5a9a"/><rect x="28" y="16" width="10" height="9" fill="#6a8ab0"/></svg>
<div style="position:absolute;left:6px;top:207px;width:52px;height:52px;border-radius:7px;background:linear-gradient(#6ac86a,#3a9a3a);box-shadow:inset 0 0 0 1px rgba(255,255,255,0.25)"></div>
<svg style="position:absolute;left:6px;top:207px" width="52" height="52"><rect x="9" y="4" width="36" height="45" rx="4" fill="#1f7a24"/><path d="M11 6 L35 6 L42 13 L42 46 L11 46 Z" fill="#f2f8f2"/><rect x="14" y="17" width="5" height="4" fill="none" stroke="#2a9a2a" stroke-width="1"/><rect x="20" y="17" width="5" height="4" fill="none" stroke="#2a9a2a" stroke-width="1"/><rect x="26" y="17" width="5" height="4" fill="none" stroke="#2a9a2a" stroke-width="1"/><rect x="32" y="17" width="5" height="4" fill="none" stroke="#2a9a2a" stroke-width="1"/><rect x="14" y="22" width="5" height="4" fill="none" stroke="#2a9a2a" stroke-width="1"/><rect x="20" y="22" width="5" height="4" fill="none" stroke="#2a9a2a" stroke-width="1"/><rect x="26" y="22" width="5" height="4" fill="none" stroke="#2a9a2a" stroke-width="1"/><rect x="32" y="22" width="5" height="4" fill="none" stroke="#2a9a2a" stroke-width="1"/><rect x="14" y="27" width="5" height="4" fill="none" stroke="#2a9a2a" stroke-width="1"/><rect x="20" y="27" width="5" height="4" fill="none" stroke="#2a9a2a" stroke-width="1"/><rect x="26" y="27" width="5" height="4" fill="none" stroke="#2a9a2a" stroke-width="1"/><rect x="32" y="27" width="5" height="4" fill="none" stroke="#2a9a2a" stroke-width="1"/><rect x="14" y="32" width="5" height="4" fill="none" stroke="#2a9a2a" stroke-width="1"/><rect x="20" y="32" width="5" height="4" fill="none" stroke="#2a9a2a" stroke-width="1"/><rect x="26" y="32" width="5" height="4" fill="none" stroke="#2a9a2a" stroke-width="1"/><rect x="32" y="32" width="5" height="4" fill="none" stroke="#2a9a2a" stroke-width="1"/><rect x="14" y="37" width="5" height="4" fill="none" stroke="#2a9a2a" stroke-width="1"/><rect x="20" y="37" width="5" height="4" fill="none" stroke="#2a9a2a" stroke-width="1"/><rect x="26" y="37" width="5" height="4" fill="none" stroke="#2a9a2a" stroke-width="1"/><rect x="32" y="37" width="5" height="4" fill="none" stroke="#2a9a2a" stroke-width="1"/><rect x="30" y="33" width="10" height="10" fill="#fff" stroke="#888"/><rect x="32" y="37" width="2" height="5" fill="#e04040"/><rect x="35" y="35" width="2" height="7" fill="#4080e0"/></svg>
<div style="position:absolute;left:6px;top:266px;width:52px;height:52px;border-radius:7px;background:linear-gradient(#d88a5a,#b0603a);box-shadow:inset 0 0 0 1px rgba(255,255,255,0.25)"></div>
<svg style="position:absolute;left:6px;top:266px" width="52" height="52"><rect x="9" y="4" width="36" height="45" rx="4" fill="#8a4220"/><path d="M11 6 L35 6 L42 13 L42 46 L11 46 Z" fill="#f4eee8"/><rect x="14" y="17" width="24" height="16" fill="#fff" stroke="#c06a3a" stroke-width="1.5"/><rect x="17" y="21" width="8" height="2" fill="#c06a3a"/><rect x="17" y="25" width="8" height="2" fill="#c06a3a"/><rect x="28" y="21" width="7" height="8" fill="#5a9a5a"/><path d="M20 40 L26 34 L32 40" fill="none" stroke="#888" stroke-width="1.2"/></svg>
<div style="position:absolute;left:6px;top:325px;width:52px;height:52px;border-radius:7px;background:linear-gradient(#e08a62,#c05a38);box-shadow:inset 0 0 0 1px rgba(255,255,255,0.25)"></div>
<svg style="position:absolute;left:6px;top:325px" width="52" height="52"><path d="M12 22 L40 22 L43 47 L9 47 Z" fill="#e8682a"/><path d="M20 22 Q20 14 26 14 Q32 14 32 22" fill="none" stroke="#b8481a" stroke-width="2"/><circle cx="14" cy="12" r="3" fill="#e8e8f0" opacity="0.8"/><circle cx="24" cy="8" r="3" fill="#e8e8f0" opacity="0.8"/><circle cx="36" cy="11" r="3" fill="#e8e8f0" opacity="0.8"/><circle cx="30" cy="16" r="2" fill="#fff" opacity="0.9"/></svg>
<div style="position:absolute;left:6px;top:384px;width:52px;height:52px;border-radius:7px;background:linear-gradient(#d86a6a,#b8383a);box-shadow:inset 0 0 0 1px rgba(255,255,255,0.25)"></div>
<svg style="position:absolute;left:6px;top:384px" width="52" height="52"><g fill="#e8e8e8"><circle cx="26" cy="27" r="15"/><rect x="22" y="6" width="8" height="8" transform="rotate(0 26 27)"/><rect x="22" y="6" width="8" height="8" transform="rotate(45 26 27)"/><rect x="22" y="6" width="8" height="8" transform="rotate(90 26 27)"/><rect x="22" y="6" width="8" height="8" transform="rotate(135 26 27)"/><rect x="22" y="6" width="8" height="8" transform="rotate(180 26 27)"/><rect x="22" y="6" width="8" height="8" transform="rotate(225 26 27)"/><rect x="22" y="6" width="8" height="8" transform="rotate(270 26 27)"/><rect x="22" y="6" width="8" height="8" transform="rotate(315 26 27)"/></g><circle cx="26" cy="27" r="7" fill="#b8383a"/><path d="M10 44 L36 16" stroke="#c83030" stroke-width="6" stroke-linecap="round"/><circle cx="38" cy="13" r="6" fill="none" stroke="#e8e8e8" stroke-width="4"/></svg>
<div style="position:absolute;left:6px;top:443px;width:52px;height:52px;border-radius:7px;background:linear-gradient(#d8b070,#b88a48);box-shadow:inset 0 0 0 1px rgba(255,255,255,0.25)"></div>
<svg style="position:absolute;left:6px;top:443px" width="52" height="52"><path d="M26 26 L5.7 20.6 A21 21 0 0 1 47.0 26.0 Z" fill="#db4437"/><path d="M26 26 L47.0 26.0 A21 21 0 0 1 19.5 46.0 Z" fill="#f4c20d"/><path d="M26 26 L19.5 46.0 A21 21 0 0 1 5.7 20.6 Z" fill="#3cba54"/><circle cx="26" cy="26" r="9.5" fill="#fff"/><circle cx="26" cy="26" r="7.3" fill="#4a7fd0"/></svg>
<div style="position:absolute;left:6px;top:502px;width:52px;height:52px;border-radius:7px;background:linear-gradient(#dadada,#b0b0b0);box-shadow:inset 0 0 0 1px rgba(255,255,255,0.25)"></div>
<svg style="position:absolute;left:6px;top:502px" width="52" height="52"><rect x="5" y="8" width="42" height="36" fill="#8a8a8a"/><rect x="7" y="10" width="38" height="32" fill="#2a2a2a"/><path d="M12 17 L18 20.5 L12 24" fill="none" stroke="#fff" stroke-width="2"/><rect x="20" y="25" width="8" height="2" fill="#fff"/></svg>
<div style="position:absolute;left:6px;top:561px;width:52px;height:52px;border-radius:7px;background:linear-gradient(#d8c870,#b8a040);box-shadow:inset 0 0 0 1px rgba(255,255,255,0.25)"></div>
<svg style="position:absolute;left:6px;top:561px" width="52" height="52"><path d="M8 18 L14 10 L40 10 L46 18 L46 44 L8 44 Z" fill="#c8b08a"/><path d="M8 18 L46 18" stroke="#a89070"/><rect x="25" y="10" width="4" height="10" fill="#e0d0b0"/><path d="M33 25 L41 25 L41 34 L46 34 L37 45 L28 34 L33 34 Z" fill="#9ad040" stroke="#6a9a20"/></svg>
<div style="position:absolute;left:6px;top:620px;width:52px;height:52px;border-radius:7px;background:linear-gradient(#e04040,#b81010);box-shadow:inset 0 0 0 1px rgba(255,255,255,0.25)"></div>
<svg style="position:absolute;left:6px;top:620px" width="52" height="52"><path d="M14 40 Q20 30 24 18 Q26 10 24 10 Q21 12 24 24 Q28 34 40 36 Q44 34 36 34 Q26 34 14 40 Z" fill="none" stroke="#fff" stroke-width="1.8"/></svg>
<div style="position:absolute;left:6px;top:679px;width:52px;height:52px;border-radius:7px;background:linear-gradient(#cacaca,#a8a8a8);box-shadow:inset 0 0 0 1px rgba(255,255,255,0.25)"></div>
<svg style="position:absolute;left:6px;top:679px" width="52" height="52"><text x="26" y="34" text-anchor="middle" font-family="Liberation Serif" font-weight="bold" font-size="22" fill="#f4f4f4" stroke="#888" stroke-width="0.6">RViz</text></svg>
<div style="position:absolute;left:6px;top:738px;width:52px;height:52px;border-radius:7px;background:linear-gradient(#9a4d6d,#7a2d4d);box-shadow:inset 0 0 0 1px rgba(255,255,255,0.25)"></div>
<svg style="position:absolute;left:6px;top:738px" width="52" height="52"><rect x="9" y="13" width="34" height="26" fill="none" stroke="#fff" stroke-width="2.2"/><path d="M26 13 V39 M9 26 H43" stroke="#ddd" stroke-width="1.2"/><rect x="12" y="16" width="8" height="5" fill="#5a1d35" stroke="#fff" stroke-width="1"/><rect x="15" y="18" width="7" height="4" fill="none" stroke="#fff" stroke-width="1"/></svg>
<div style="position:absolute;left:6px;top:1022px;width:52px;height:52px;border-radius:7px;background:linear-gradient(#9a4d6d,#7a2d4d)"></div>
<svg style="position:absolute;left:6px;top:1022px" width="52" height="52"><path d="M8.5 12 L43.5 12 L39 46 Q26 49 13 46 Z" fill="#a8788e" opacity="0.8"/><path d="M8.5 12 L43.5 12 L39 46 Q26 49 13 46 Z" fill="none" stroke="#d0c0c8" stroke-width="1"/><ellipse cx="26" cy="12" rx="18" ry="4.5" fill="none" stroke="#e8e4e6" stroke-width="2.6"/><ellipse cx="26" cy="45" rx="13" ry="3.2" fill="#d8ccd2"/></svg>
<svg style="position:absolute;left:0;top:110px" width="6" height="10"><path d="M0 0.5 L5 5 L0 9.5 Z" fill="#c8c8c8"/></svg>
<svg style="position:absolute;left:0;top:582px" width="6" height="10"><path d="M0 0.5 L5 5 L0 9.5 Z" fill="#c8c8c8"/></svg>
<svg style="position:absolute;left:0;top:700px" width="6" height="10"><path d="M0 0.5 L5 5 L0 9.5 Z" fill="#c8c8c8"/></svg>
<svg style="position:absolute;left:0;top:522px" width="6" height="12"><path d="M0 1 H5 M0 4.5 H5 M0 8 H5" stroke="#c8c8c8" stroke-width="1.6"/></svg>
<svg style="position:absolute;left:59px;top:523px" width="6" height="10"><path d="M5.5 0.5 L0.5 5 L5.5 9.5 Z" fill="#e8e8e8"/></svg>
<div style="position:absolute;left:1232px;top:688px;width:700px;height:400px;border-radius:7px 7px 0 0;background:#300a24;overflow:hidden;box-shadow:-1px 0 6px rgba(0,0,0,0.55)"><div style="position:absolute;left:0;top:0;width:100%;height:27px;background:linear-gradient(#55534d,#3c3b37)"></div></div>
<svg style="position:absolute;left:1240px;top:692px" width="56" height="20"><circle cx="10.5" cy="9.5" r="7.5" fill="#e8562a" stroke="#5a2a18" stroke-width="0.8"/><path d="M7.5 6.5 L13.5 12.5 M13.5 6.5 L7.5 12.5" stroke="#3a1a10" stroke-width="1.2"/><circle cx="28.3" cy="9.5" r="7.5" fill="#77756f" stroke="#3a3935" stroke-width="0.8"/><path d="M24.8 9.5 H31.8" stroke="#2a2a28" stroke-width="1.3"/><circle cx="46.3" cy="9.5" r="7.5" fill="#77756f" stroke="#3a3935" stroke-width="0.8"/><rect x="42.8" y="6" width="7" height="7" fill="none" stroke="#2a2a28" stroke-width="1.2"/></svg>
<div style="position:absolute;left:1307px;top:693.63px;font-family:'Liberation Sans', sans-serif;font-size:14.65px;line-height:17.58px;color:#dfdbd2;font-weight:bold;white-space:pre;">ros@andreyROS: ~/Downloads</div>
<div style="position:absolute;left:1242px;top:719px;font-family:'Liberation Mono',monospace;font-size:15px;line-height:18px;color:#ffffff;white-space:pre">[RUNNING]  Bag Time: 1365971776.469207   Duration: 7.713080 / 84.232618
[RUNNING]  Bag Time: 1365971776.474776   Duration: 7.718649 / 84.232618
[RUNNING]  Bag Time: 1365971776.490520   Duration: 7.734393 / 84.232618
[RUNNING]  Bag Time: 1365971776.520036   Duration: 7.763910 / 84.232618
[PAUSED]   Bag Time: 1365971776.556568   Duration: 7.800441 / 84.232618
[PAUSED]   Bag Time: 1365971776.556568   Duration: 7.800441 / 84.232618
[PAUSED]   Bag Time: 1365971776.556568   Duration: 7.800441 / 84.232618
[PAUSED]   Bag Time: 1365971776.556568   Duration: 7.800441 / 84.232618
[PAUSED]   Bag Time: 1365971776.556568   Duration: 7.800441 / 84.232618
[PAUSED]   Bag Time: 1365971776.556568   Duration: 7.800441 / 84.232618
[PAUSED]   Bag Time: 1365971776.556568   Duration: 7.800441 / 84.232618
[PAUSED]   Bag Time: 1365971776.556568   Duration: 7.800441 / 84.232618
[PAUSED]   Bag Time: 1365971776.556568   Duration: 7.800441 / 84.232618
[PAUSED]   Bag Time: 1365971776.556568   Duration: 7.800441 / 84.232618
[PAUSED]   Bag Time: 1365971776.556568   Duration: 7.800441 / 84.232618
[PAUSED]   Bag Time: 1365971776.556568   Duration: 7.800441 / 84.232618
[PAUSED]   Bag Time: 1365971776.556568   Duration: 7.800441 / 84.232618
[PAUSED]   Bag Time: 1365971776.556568   Duration: 7.800441 / 84.232618
[PAUSED]   Bag Time: 1365971776.556568   Duration: 7.800441 / 84.232618
[PAUSED]   Bag Time: 1365971777.566926   Duration: 8.810799 / 84.232618</div>
<div style="position:absolute;left:1233px;top:1059px;width:9px;height:18px;background:#fff"></div>
<div style="position:absolute;left:0;top:24px;width:1920px;height:5px;background:linear-gradient(rgba(0,0,0,0.5),rgba(0,0,0,0))"></div>
</body></html>
